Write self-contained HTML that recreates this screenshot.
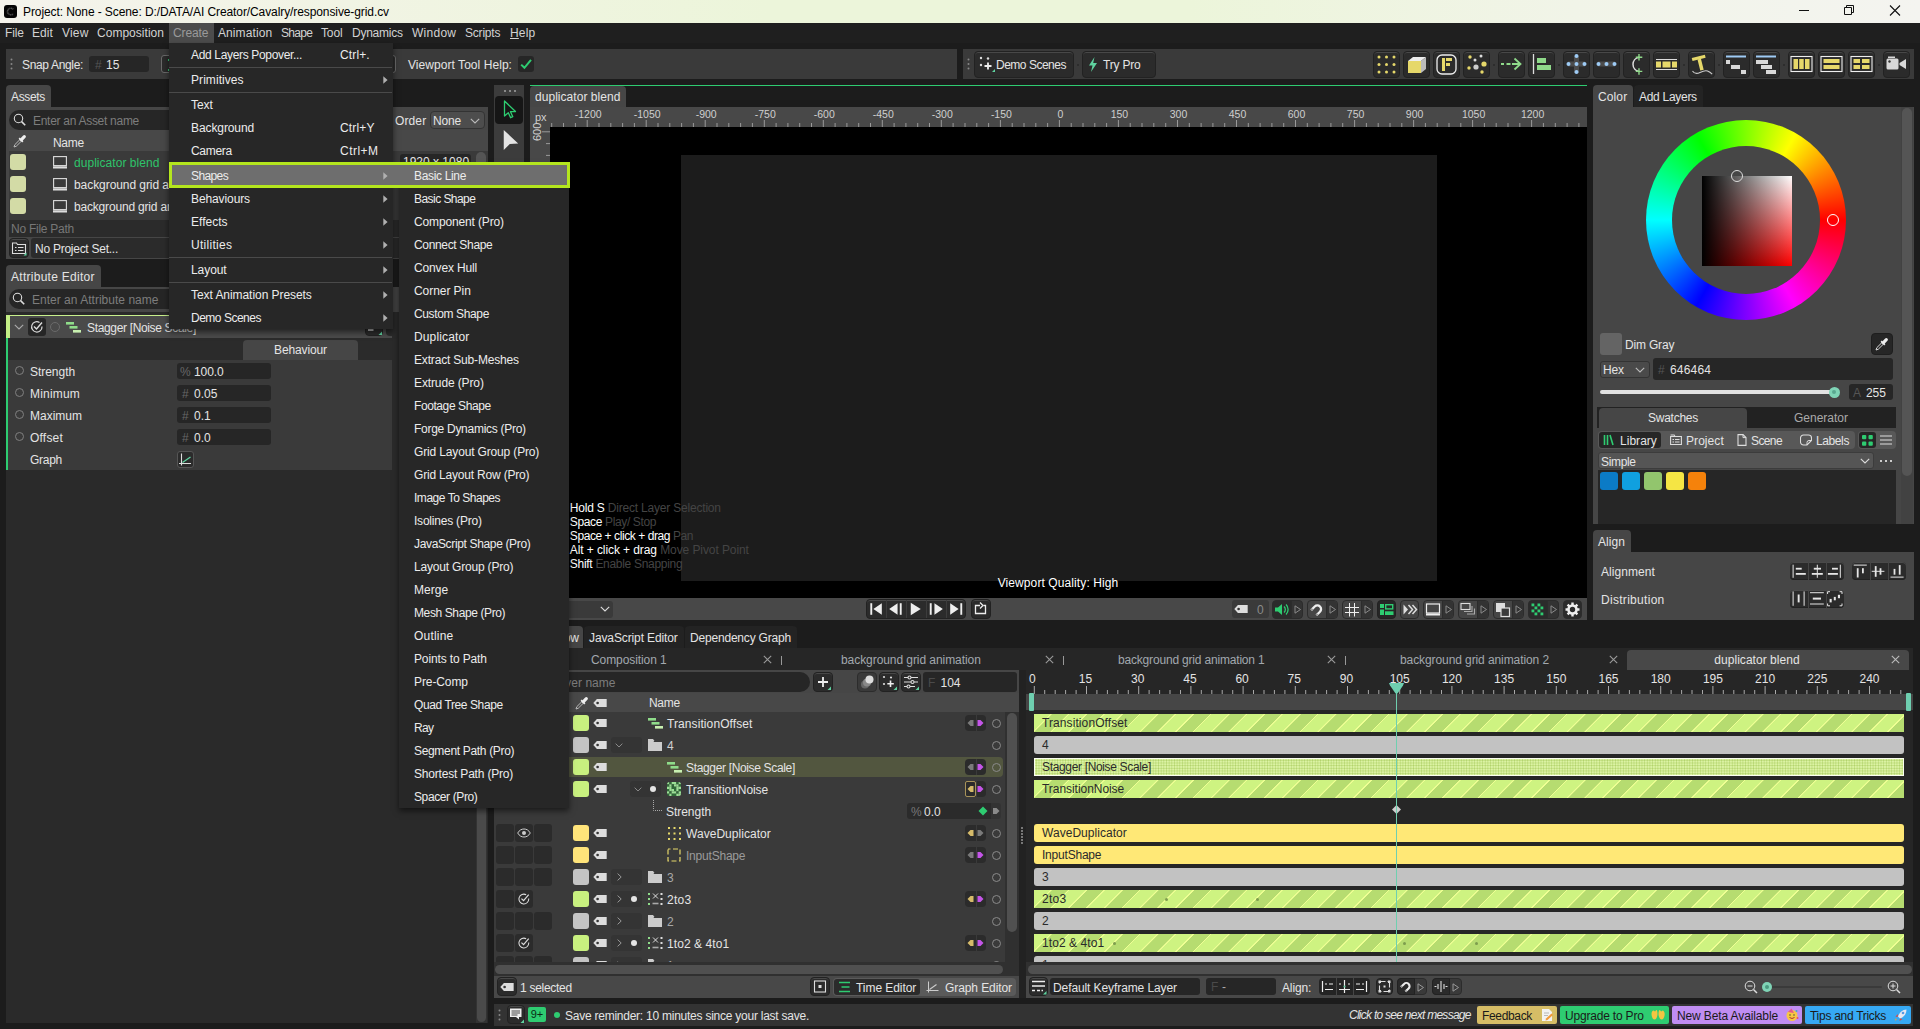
<!DOCTYPE html><html><head><meta charset="utf-8"><title>Cavalry</title><style>
*{box-sizing:border-box}
html,body{margin:0;padding:0}
body{width:1920px;height:1029px;overflow:hidden;background:#1c1c1c;font:12px "Liberation Sans",sans-serif;color:#e4e4e4;position:relative}
div,svg,span.a{position:absolute}
.t{white-space:pre}
.dim{color:#8a8a8a}
.btn{background:#2b2b2b;border:1px solid #222;border-radius:4px;box-shadow:inset 0 1px 0 #484848}
.fld{background:#262626;border-radius:3px}
.tab{background:#464646;border-radius:4px 4px 0 0}
.tabi{background:#232323;border-radius:4px 4px 0 0}
.mi{left:0;width:100%;height:23px;line-height:23px}
</style></head><body>
<div style="left:0px;top:0px;width:1920px;height:23px;background:linear-gradient(90deg,#f4f3ec 0%,#f1f4e4 18%,#ecf5da 40%,#ecf5da 62%,#f1f4e8 82%,#f4f4f0 100%)"></div>
<svg style="left:3.500px;top:4.500px" width="13" height="13" viewBox="0 0 13 13"><rect x="0" y="0" width="13" height="13" rx="3" fill="#050505"/><path d="M9.2 4.2A3.3 3.3 0 1 0 9.2 8.8" fill="none" stroke="#555" stroke-width="1.6" stroke-dasharray="1 .5"/></svg>
<div class="t" style="left:23px;top:1px;height:23px;line-height:23px;color:#000;letter-spacing:-0.094px">Project: None - Scene: D:/DATA/AI Creator/Cavalry/responsive-grid.cv</div>
<svg style="left:1794px;top:0" width="120" height="23" viewBox="0 0 120 23"><path d="M5 10.5h10" stroke="#111" stroke-width="1"/><path d="M50.5 7.5h7v7h-7z M52.5 7.5v-2h7v7h-2" fill="none" stroke="#111" stroke-width="1"/><path d="M96 5.5l10 10M106 5.5l-10 10" stroke="#111" stroke-width="1.1"/></svg>
<div style="left:0px;top:23px;width:1920px;height:20px;background:#1f1f1f"></div>
<div style="left:169px;top:23px;width:45px;height:20px;background:#4c4c4c"></div>
<div class="t" style="left:5px;top:23px;height:20px;line-height:20px;color:#d2d2d2;letter-spacing:-0.161px">File</div>
<div class="t" style="left:32px;top:23px;height:20px;line-height:20px;color:#d2d2d2;letter-spacing:0.028px">Edit</div>
<div class="t" style="left:62px;top:23px;height:20px;line-height:20px;color:#d2d2d2;letter-spacing:0.176px">View</div>
<div class="t" style="left:97px;top:23px;height:20px;line-height:20px;color:#d2d2d2;letter-spacing:0.027px">Composition</div>
<div class="t" style="left:173px;top:23px;height:20px;line-height:20px;color:#9a9a9a;letter-spacing:-0.105px">Create</div>
<div class="t" style="left:218px;top:23px;height:20px;line-height:20px;color:#d2d2d2;letter-spacing:0.092px">Animation</div>
<div class="t" style="left:281px;top:23px;height:20px;line-height:20px;color:#d2d2d2;letter-spacing:-0.681px">Shape</div>
<div class="t" style="left:321px;top:23px;height:20px;line-height:20px;color:#d2d2d2;letter-spacing:-0.129px">Tool</div>
<div class="t" style="left:352px;top:23px;height:20px;line-height:20px;color:#d2d2d2;letter-spacing:-0.248px">Dynamics</div>
<div class="t" style="left:412px;top:23px;height:20px;line-height:20px;color:#d2d2d2;letter-spacing:0.269px">Window</div>
<div class="t" style="left:465px;top:23px;height:20px;line-height:20px;color:#d2d2d2;letter-spacing:-0.198px">Scripts</div>
<div class="t" style="left:510px;top:23px;height:20px;line-height:20px;color:#d2d2d2;letter-spacing:0.153px"><u>H</u>elp</div>
<div style="left:6px;top:49px;width:951px;height:30px;background:#3a3a3a"></div>
<svg style="left:10px;top:58px" width="3" height="12" viewBox="0 0 3 12"><circle cx="1.5" cy="1.5" r="1" fill="#888"/><circle cx="1.5" cy="6" r="1" fill="#888"/><circle cx="1.5" cy="10.5" r="1" fill="#888"/></svg>
<div class="t" style="left:22px;top:50px;height:30px;line-height:30px;;letter-spacing:-0.339px">Snap Angle:</div>
<div class="fld" style="left:89px;top:56px;width:60px;height:16px;"></div>
<div class="t" style="left:95px;top:57px;height:16px;line-height:16px;color:#555">#</div>
<div class="t" style="left:106px;top:57px;height:16px;line-height:16px;">15</div>
<div style="left:161px;top:55px;width:235px;height:18px;background:#2b2b2b;border:1px solid #6a6a6a;border-radius:3px"></div>
<div style="left:168px;top:58.5px;width:1px;height:2px;background:#2ecc71"></div>
<div style="left:168px;top:68.5px;width:1px;height:2px;background:#2ecc71"></div>
<div class="t" style="left:408px;top:50px;height:30px;line-height:30px;;letter-spacing:0.055px">Viewport Tool Help:</div>
<div class="fld" style="left:518px;top:56px;width:16px;height:16px;"></div>
<svg style="left:518px;top:56px" width="16" height="16" viewBox="0 0 16 16"><path d="M3.2 8.6l3.2 3.2 6.6-8" fill="none" stroke="#2ecc71" stroke-width="2"/></svg>
<div style="left:963px;top:49px;width:951px;height:30px;background:#3a3a3a"></div>
<svg style="left:967px;top:58px" width="3" height="12" viewBox="0 0 3 12"><circle cx="1.5" cy="1.5" r="1" fill="#888"/><circle cx="1.5" cy="6" r="1" fill="#888"/><circle cx="1.5" cy="10.5" r="1" fill="#888"/></svg>
<div class="btn" style="left:974px;top:51px;width:100px;height:27px;"></div>
<svg style="left:978px;top:55px" width="20" height="20" viewBox="0 0 20 20"><g fill="#ddd"><circle cx="3" cy="3" r="1.2"/><circle cx="10" cy="3.5" r="1.2"/><circle cx="3" cy="10" r="1.2"/></g><path d="M10 7.5v7M6.5 11h7" stroke="#eee" stroke-width="1.8"/><path d="M17 14v3h-3z" fill="#5fd3a0"/></svg>
<div class="t" style="left:996px;top:52px;height:27px;line-height:27px;;letter-spacing:-0.489px">Demo Scenes</div>
<div class="btn" style="left:1082px;top:51px;width:74px;height:27px;"></div>
<svg style="left:1087px;top:56px" width="12" height="18" viewBox="0 0 12 18"><path d="M7.5 1L2 9.5h3.5L4 16l6-9H6.2z" fill="#5fd3a0"/></svg>
<div class="t" style="left:1103px;top:52px;height:27px;line-height:27px;;letter-spacing:-0.199px">Try Pro</div>
<div class="btn" style="left:1373px;top:51px;width:27px;height:27px;"></div>
<svg style="left:1373px;top:51px" width="27" height="27" viewBox="0 0 27 27"><g fill="#e6d86a"><circle cx="6.0" cy="6.0" r="1.5"/><circle cx="6.0" cy="13.5" r="1.5"/><circle cx="6.0" cy="21.0" r="1.5"/><circle cx="13.5" cy="6.0" r="1.5"/><circle cx="13.5" cy="13.5" r="1.5"/><circle cx="13.5" cy="21.0" r="1.5"/><circle cx="21.0" cy="6.0" r="1.5"/><circle cx="21.0" cy="13.5" r="1.5"/><circle cx="21.0" cy="21.0" r="1.5"/></g></svg>
<div class="btn" style="left:1403px;top:51px;width:27px;height:27px;"></div>
<svg style="left:1403px;top:51px" width="27" height="27" viewBox="0 0 27 27"><path d="M5 10h13v12H5z" fill="#e6d86a"/><path d="M5 10l5-4h13l-5 4z" fill="#eee"/><path d="M18 10l5-4v12l-5 4z" fill="#bbb"/></svg>
<div class="btn" style="left:1433px;top:51px;width:27px;height:27px;"></div>
<svg style="left:1433px;top:51px" width="27" height="27" viewBox="0 0 27 27"><rect x="4" y="4" width="19" height="19" rx="5" fill="none" stroke="#eee" stroke-width="1.3"/><path d="M9 7h3v13H9zM13 7h6v3h-6zM13 12h4v3h-4z" fill="#e6d86a"/></svg>
<div class="btn" style="left:1463px;top:51px;width:27px;height:27px;"></div>
<svg style="left:1463px;top:51px" width="27" height="27" viewBox="0 0 27 27"><circle cx="7" cy="6" r="1.7" fill="#e6d86a"/><circle cx="18" cy="5" r="1.5" fill="#ddd"/><circle cx="12" cy="9" r="1.5" fill="#ddd"/><circle cx="21" cy="13" r="2.6" fill="#e6d86a"/><circle cx="13" cy="16" r="2.6" fill="#ccc"/><circle cx="6" cy="17" r="1.7" fill="#e6d86a"/><circle cx="19" cy="21" r="1.7" fill="#e6d86a"/></svg>
<div class="btn" style="left:1498px;top:51px;width:27px;height:27px;"></div>
<svg style="left:1498px;top:51px" width="27" height="27" viewBox="0 0 27 27"><path d="M3 13h3M8.5 13h4M14 13h8M16.5 7.5l6 5.5-6 5.5" fill="none" stroke="#8fd98a" stroke-width="1.8"/></svg>
<div class="btn" style="left:1528px;top:51px;width:27px;height:27px;"></div>
<svg style="left:1528px;top:51px" width="27" height="27" viewBox="0 0 27 27"><path d="M5.5 3v20" stroke="#ddd" stroke-width="1.3"/><rect x="9" y="7" width="9" height="5" fill="#8fd98a"/><rect x="9" y="14" width="14" height="5" fill="#8fd98a"/></svg>
<div class="btn" style="left:1563px;top:51px;width:27px;height:27px;"></div>
<svg style="left:1563px;top:51px" width="27" height="27" viewBox="0 0 27 27"><path d="M5 13h17M13.5 5v17" stroke="#4c4c4c" stroke-width="5"/><g fill="#9ecbf5"><circle cx="13.5" cy="5" r="2"/><circle cx="13.5" cy="13" r="2"/><circle cx="13.5" cy="21" r="2"/><circle cx="5.5" cy="13" r="2"/><circle cx="21.5" cy="13" r="2"/></g></svg>
<div class="btn" style="left:1593px;top:51px;width:27px;height:27px;"></div>
<svg style="left:1593px;top:51px" width="27" height="27" viewBox="0 0 27 27"><path d="M5 13h17" stroke="#4c4c4c" stroke-width="5"/><g fill="#9ecbf5"><circle cx="5.5" cy="13" r="2"/><circle cx="13.5" cy="13" r="2"/><circle cx="21.5" cy="13" r="2"/></g></svg>
<div class="btn" style="left:1623px;top:51px;width:27px;height:27px;"></div>
<svg style="left:1623px;top:51px" width="27" height="27" viewBox="0 0 27 27"><path d="M16 6.200A7.200 7.200 0 0 0 16 20.400" fill="none" stroke="#ddd" stroke-width="1.500"/><path d="M16 3v6.500M12.800 6.200h6.500M16 17.200v6.500M12.800 20.400h6.500" fill="none" stroke="#8fd98a" stroke-width="1.400"/></svg>
<div class="btn" style="left:1653px;top:51px;width:27px;height:27px;"></div>
<svg style="left:1653px;top:51px" width="27" height="27" viewBox="0 0 27 27"><path d="M3 8.5h21M3 18.5h21" stroke="#ddd" stroke-width="1.1"/><rect x="3" y="10.5" width="5" height="6" fill="#e6d86a"/><rect x="9.5" y="10.5" width="8" height="6" fill="#e6d86a"/><rect x="19" y="10.5" width="5" height="6" fill="#e6d86a"/></svg>
<div class="btn" style="left:1688px;top:51px;width:27px;height:27px;"></div>
<svg style="left:1688px;top:51px" width="27" height="27" viewBox="0 0 27 27"><g transform="rotate(-14 11 7)"><rect x="4" y="5.200" width="13.500" height="3.200" fill="#e6d86a"/><rect x="9.200" y="8" width="3.500" height="11.500" fill="#e6d86a"/></g><path d="M4.500 20c2 3 4.500 3 7.500 1.500s5-2.500 7.500-1.500 3.500 2 4.700 3.200" fill="none" stroke="#ccc" stroke-width="1.100"/></svg>
<div class="btn" style="left:1723px;top:51px;width:27px;height:27px;"></div>
<svg style="left:1723px;top:51px" width="27" height="27" viewBox="0 0 27 27"><path d="M3 5.5h20" stroke="#9ecbf5" stroke-width="2"/><rect x="3" y="9" width="4" height="4" fill="#d8d8d8"/><rect x="8" y="14" width="9" height="4" fill="#d8d8d8"/><rect x="18" y="19" width="5" height="4" fill="#d8d8d8"/></svg>
<div class="btn" style="left:1753px;top:51px;width:27px;height:27px;"></div>
<svg style="left:1753px;top:51px" width="27" height="27" viewBox="0 0 27 27"><path d="M3 5.5h20" stroke="#9ecbf5" stroke-width="2"/><rect x="3" y="9" width="12" height="4" fill="#d8d8d8"/><rect x="8" y="14" width="11" height="4" fill="#d8d8d8"/><rect x="13" y="19" width="10" height="4" fill="#d8d8d8"/></svg>
<div class="btn" style="left:1788px;top:51px;width:27px;height:27px;"></div>
<svg style="left:1788px;top:51px" width="27" height="27" viewBox="0 0 27 27"><rect x="3" y="5.5" width="21" height="15" fill="none" stroke="#eee" stroke-width="1.1"/><rect x="5.5" y="8" width="4.5" height="10" fill="#e6d86a"/><rect x="11.2" y="8" width="4.5" height="10" fill="#e6d86a"/><rect x="17" y="8" width="4.5" height="10" fill="#e6d86a"/></svg>
<div class="btn" style="left:1818px;top:51px;width:27px;height:27px;"></div>
<svg style="left:1818px;top:51px" width="27" height="27" viewBox="0 0 27 27"><rect x="3" y="5.5" width="21" height="15" fill="none" stroke="#eee" stroke-width="1.1"/><rect x="5.5" y="8" width="16" height="4" fill="#e6d86a"/><rect x="5.5" y="14" width="16" height="4" fill="#e6d86a"/></svg>
<div class="btn" style="left:1848px;top:51px;width:27px;height:27px;"></div>
<svg style="left:1848px;top:51px" width="27" height="27" viewBox="0 0 27 27"><rect x="3" y="5.5" width="21" height="15" fill="none" stroke="#eee" stroke-width="1.1"/><rect x="5.5" y="8" width="6.5" height="4" fill="#e6d86a"/><rect x="14" y="8" width="7.5" height="4" fill="#e6d86a"/><rect x="5.5" y="14" width="6.5" height="4" fill="#e6d86a"/><rect x="14" y="14" width="7.5" height="4" fill="#e6d86a"/></svg>
<div class="btn" style="left:1883px;top:51px;width:27px;height:27px;"></div>
<svg style="left:1883px;top:51px" width="27" height="27" viewBox="0 0 27 27"><rect x="3.5" y="7.5" width="12" height="11" rx="1.5" fill="#d8d8d8"/><rect x="5" y="5.5" width="7" height="1.5" fill="#d8d8d8"/><path d="M16.5 12l6.5-4v10l-6.5-4z" fill="#d8d8d8"/><circle cx="6.5" cy="10.5" r="1.2" fill="#333"/></svg>
<div style="left:1492.5px;top:63.5px;width:2px;height:2px;background:#2a2a2a;border-radius:1px"></div>
<div style="left:1557.5px;top:63.5px;width:2px;height:2px;background:#2a2a2a;border-radius:1px"></div>
<div style="left:1682.5px;top:63.5px;width:2px;height:2px;background:#2a2a2a;border-radius:1px"></div>
<div style="left:1717.5px;top:63.5px;width:2px;height:2px;background:#2a2a2a;border-radius:1px"></div>
<div style="left:1782.5px;top:63.5px;width:2px;height:2px;background:#2a2a2a;border-radius:1px"></div>
<div style="left:1877.5px;top:63.5px;width:2px;height:2px;background:#2a2a2a;border-radius:1px"></div>
<div style="left:1077px;top:63.5px;width:2px;height:2px;background:#2a2a2a;border-radius:1px"></div>
<div style="left:6px;top:85px;width:482px;height:22px;background:#1c1c1c"></div>
<div class="tab" style="left:6px;top:85px;width:45px;height:22px;"></div>
<div class="t" style="left:11px;top:86px;height:22px;line-height:22px;;letter-spacing:-0.336px">Assets</div>
<div style="left:6px;top:107px;width:482px;height:152px;background:#464646"></div>
<div style="left:9px;top:110px;width:382px;height:20px;background:#262626;border-radius:10px 3px 3px 10px"></div>
<svg style="left:13px;top:113px" width="14" height="14" viewBox="0 0 14 14"><circle cx="5.5" cy="5.5" r="4.2" fill="none" stroke="#ddd" stroke-width="1.1"/><path d="M8.6 8.6l3.6 3.6" stroke="#ddd" stroke-width="1.6"/></svg>
<div class="t" style="left:33px;top:111px;height:20px;line-height:20px;color:#7d7d7d;letter-spacing:-0.285px">Enter an Asset name</div>
<div class="t" style="left:395px;top:111px;height:20px;line-height:20px;;letter-spacing:0.113px">Order</div>
<div style="left:430px;top:111px;width:55px;height:18px;background:#4d4d4d;border:1px solid #333;border-radius:4px"></div>
<div class="t" style="left:433px;top:112px;height:18px;line-height:18px;;letter-spacing:-0.172px">None</div>
<svg style="left:470px;top:118px" width="10" height="6.0" viewBox="0 0 10 6"><path d="M0.8 0.8L5 5l4.2-4.200" fill="none" stroke="#bbb" stroke-width="1.1"/></svg>
<div style="left:9px;top:130px;width:479px;height:21px;background:#484848"></div>
<svg style="left:13px;top:134px" width="14" height="14" viewBox="0 0 14 14"><path d="M1 13l.8-2.300 5.200-5.200 1.500 1.500-5.200 5.200z" fill="none" stroke="#bbb" stroke-width="1"/><path d="M6.200 4.200l3.600 3.600" stroke="#eee" stroke-width="1.800"/><path d="M8.700 5.300l2.600-2.600" stroke="#eee" stroke-width="3.200" stroke-linecap="round"/></svg>
<div class="t" style="left:53px;top:133px;height:21px;line-height:21px;;letter-spacing:-0.304px">Name</div>
<div style="left:9px;top:151px;width:466px;height:69px;background:#3a3a3a"></div>
<div class="fld" style="left:400px;top:154px;width:71px;height:16px;"></div>
<div class="t" style="left:403px;top:154px;height:16px;line-height:16px;">1920 x 1080</div>
<div style="left:474px;top:151px;width:14px;height:69px;background:#3a3a3a"></div>
<div style="left:476px;top:152px;width:10px;height:40px;background:#555;border-radius:5px"></div>
<div style="left:10px;top:154px;width:16px;height:16px;background:#d3dba6;border-radius:3px"></div>
<svg style="left:53px;top:156px" width="14" height="13" viewBox="0 0 14 13"><rect x="0.6" y="0.6" width="12.8" height="9" fill="none" stroke="#ddd" stroke-width="1.1"/><rect x="0" y="10.3" width="14" height="2.2" fill="#ddd"/></svg>
<div class="t" style="left:74px;top:152px;height:22px;line-height:22px;color:#2ec46a;letter-spacing:0.042px">duplicator blend</div>
<div style="left:10px;top:176px;width:16px;height:16px;background:#d3dba6;border-radius:3px"></div>
<svg style="left:53px;top:178px" width="14" height="13" viewBox="0 0 14 13"><rect x="0.6" y="0.6" width="12.8" height="9" fill="none" stroke="#ddd" stroke-width="1.1"/><rect x="0" y="10.3" width="14" height="2.2" fill="#ddd"/></svg>
<div class="t" style="left:74px;top:174px;height:22px;line-height:22px;color:#e4e4e4;letter-spacing:-0.065px">background grid animation</div>
<div style="left:10px;top:198px;width:16px;height:16px;background:#d3dba6;border-radius:3px"></div>
<svg style="left:53px;top:200px" width="14" height="13" viewBox="0 0 14 13"><rect x="0.6" y="0.6" width="12.8" height="9" fill="none" stroke="#ddd" stroke-width="1.1"/><rect x="0" y="10.3" width="14" height="2.2" fill="#ddd"/></svg>
<div class="t" style="left:74px;top:196px;height:22px;line-height:22px;color:#e4e4e4;letter-spacing:-0.183px">background grid animation 1</div>
<div style="left:9px;top:220px;width:466px;height:17px;background:#2b2b2b"></div>
<div class="t" style="left:11px;top:221px;height:17px;line-height:17px;color:#777;letter-spacing:-0.253px">No File Path</div>
<div class="btn" style="left:9px;top:238px;width:20px;height:20px;"></div>
<svg style="left:11px;top:240px" width="16" height="16" viewBox="0 0 16 16"><path d="M1.500 3h4l1 1.500h8v9h-13z" fill="none" stroke="#ddd" stroke-width="1.1"/><path d="M4 7.500h1.500M7 7.500h5.500M4 10.500h1.500M7 10.500h5.500" stroke="#ddd" stroke-width="1.1"/><path d="M15.500 12.500v3h-3z" fill="#5fd3a0"/></svg>
<div style="left:31px;top:238px;width:444px;height:20px;background:#2b2b2b;border-radius:3px"></div>
<div class="t" style="left:35px;top:239px;height:20px;line-height:20px;;letter-spacing:-0.257px">No Project Set...</div>
<div style="left:6px;top:265px;width:482px;height:22px;background:#1c1c1c"></div>
<div class="tab" style="left:6px;top:265px;width:95px;height:22px;"></div>
<div class="t" style="left:11px;top:266px;height:22px;line-height:22px;;letter-spacing:0.273px">Attribute Editor</div>
<div style="left:6px;top:287px;width:482px;height:736px;background:#2a2a2a"></div>
<div style="left:6px;top:287px;width:482px;height:25px;background:#464646"></div>
<div style="left:9px;top:289px;width:382px;height:20px;background:#262626;border-radius:10px 3px 3px 10px"></div>
<svg style="left:12px;top:292px" width="14" height="14" viewBox="0 0 14 14"><circle cx="5.5" cy="5.5" r="4.2" fill="none" stroke="#ddd" stroke-width="1.1"/><path d="M8.6 8.6l3.6 3.6" stroke="#ddd" stroke-width="1.6"/></svg>
<div class="t" style="left:32px;top:290px;height:20px;line-height:20px;color:#7d7d7d;letter-spacing:0.018px">Enter an Attribute name</div>
<div style="left:476px;top:312px;width:11px;height:711px;background:#333"></div>
<div style="left:477px;top:313px;width:9px;height:709px;background:#4a4a4a;border-radius:4.5px"></div>
<div style="left:6px;top:315px;width:386px;height:23px;background:#4a4a4a;border-top:1px solid #c8f08c"></div>
<div style="left:6px;top:315px;width:4px;height:23px;background:#c4ee86"></div>
<div style="left:6px;top:338px;width:1.5px;height:132px;background:#2ecc71"></div>
<svg style="left:14px;top:324px" width="10" height="6.0" viewBox="0 0 10 6"><path d="M0.8 0.8L5 5l4.2-4.200" fill="none" stroke="#aaa" stroke-width="1.1"/></svg>
<div style="left:28px;top:318px;width:18px;height:18px;background:#262626;border-radius:3px"></div>
<svg style="left:30px;top:320px" width="14" height="14" viewBox="0 0 14 14"><path d="M12 6.500A5.200 5.200 0 1 1 9.500 2.400" fill="none" stroke="#ddd" stroke-width="1.200"/><path d="M4 6.500l2.500 2.500 5.500-6.500" fill="none" stroke="#ddd" stroke-width="1.400"/></svg>
<div style="left:50px;top:322px;width:10px;height:10px;border:1px solid #6a6a6a;border-radius:5px"></div>
<svg style="left:66px;top:322px" width="15" height="11" viewBox="0 0 15 11"><rect x="0" y="0" width="8" height="2.600" fill="#8fdc8a"/><rect x="3.500" y="4" width="8" height="2.600" fill="#8fdc8a"/><rect x="7" y="8" width="8" height="2.600" fill="#c8f0b0"/></svg>
<div class="t" style="left:87px;top:317px;height:23px;line-height:23px;;letter-spacing:-0.341px">Stagger [Noise Scale]</div>
<div class="btn" style="left:365px;top:318px;width:18px;height:18px;"></div>
<svg style="left:365px;top:318px" width="18" height="18" viewBox="0 0 18 18"><path d="M3 12h5.500" stroke="#ddd" stroke-width="1.500"/><path d="M17 13.500V17h-3.500z" fill="#5fd3a0"/></svg>
<div style="left:386px;top:318px;width:6px;height:18px;background:#2b2b2b;border-radius:4px 0 0 4px"></div>
<div style="left:7.5px;top:338px;width:384.5px;height:22px;background:#2b2b2b"></div>
<div style="left:243px;top:340px;width:115px;height:20px;background:#464646;border-radius:4px 4px 0 0"></div>
<div class="t" style="left:243px;top:340px;height:20px;line-height:20px;width:115px;text-align:center;letter-spacing:-0.116px">Behaviour</div>
<div style="left:7.5px;top:360px;width:384.5px;height:110px;background:#3a3a3a"></div>
<div style="left:14.5px;top:365.5px;width:9px;height:9px;border:1px solid #808080;border-radius:5px"></div>
<div class="t" style="left:30px;top:361px;height:22px;line-height:22px;;letter-spacing:-0.034px">Strength</div>
<div class="fld" style="left:177px;top:363px;width:94px;height:16px;"></div>
<div class="t" style="left:180px;top:364px;height:16px;line-height:16px;color:#666">%</div>
<div class="t" style="left:194px;top:364px;height:16px;line-height:16px;;letter-spacing:-0.086px">100.0</div>
<div style="left:14.5px;top:387.5px;width:9px;height:9px;border:1px solid #808080;border-radius:5px"></div>
<div class="t" style="left:30px;top:383px;height:22px;line-height:22px;;letter-spacing:0.190px">Minimum</div>
<div class="fld" style="left:177px;top:385px;width:94px;height:16px;"></div>
<div class="t" style="left:182px;top:386px;height:16px;line-height:16px;color:#666">#</div>
<div class="t" style="left:194px;top:386px;height:16px;line-height:16px;;letter-spacing:-0.015px">0.05</div>
<div style="left:14.5px;top:409.5px;width:9px;height:9px;border:1px solid #808080;border-radius:5px"></div>
<div class="t" style="left:30px;top:405px;height:22px;line-height:22px;;letter-spacing:-0.002px">Maximum</div>
<div class="fld" style="left:177px;top:407px;width:94px;height:16px;"></div>
<div class="t" style="left:182px;top:408px;height:16px;line-height:16px;color:#666">#</div>
<div class="t" style="left:194px;top:408px;height:16px;line-height:16px;">0.1</div>
<div style="left:14.5px;top:431.5px;width:9px;height:9px;border:1px solid #808080;border-radius:5px"></div>
<div class="t" style="left:30px;top:427px;height:22px;line-height:22px;;letter-spacing:0.201px">Offset</div>
<div class="fld" style="left:177px;top:429px;width:94px;height:16px;"></div>
<div class="t" style="left:182px;top:430px;height:16px;line-height:16px;color:#666">#</div>
<div class="t" style="left:194px;top:430px;height:16px;line-height:16px;">0.0</div>
<div class="t" style="left:30px;top:449px;height:22px;line-height:22px;;letter-spacing:-0.272px">Graph</div>
<div style="left:177px;top:451px;width:17px;height:17px;background:#2b2b2b;border:1px solid #555;border-radius:3px"></div>
<svg style="left:178px;top:452px" width="15" height="15" viewBox="0 0 15 15"><path d="M3.500 1.500v12M1 11.500h12" stroke="#ddd" stroke-width="1.100" fill="none"/><path d="M4.500 10.500l8-5.500" stroke="#5fd3a0" stroke-width="1.300"/></svg>
<div style="left:494px;top:85px;width:30px;height:535px;background:#3c3c3c"></div>
<div style="left:503.5px;top:89.5px;width:2px;height:2px;background:#888"></div>
<div style="left:508.5px;top:89.5px;width:2px;height:2px;background:#888"></div>
<div style="left:513.5px;top:89.5px;width:2px;height:2px;background:#888"></div>
<div style="left:495px;top:96px;width:28px;height:28px;background:#161616;border-radius:4px"></div>
<svg style="left:495px;top:96px" width="28" height="28" viewBox="0 0 28 28"><path d="M9.500 5v15l3.800-3.300 2.300 5 2.200-1-2.300-5 5-.200z" fill="none" stroke="#2ecc71" stroke-width="1.300" stroke-linejoin="round"/></svg>
<svg style="left:495px;top:125px" width="28" height="28" viewBox="0 0 28 28"><path d="M8.750 5L23.200 18.400l-8.400.5-6.050 6.100z" fill="#e4e4e4"/></svg>
<div style="left:530px;top:85px;width:1057px;height:22px;background:#1c1c1c"></div>
<div style="left:530px;top:85px;width:1057px;height:1px;background:#2ecc71"></div>
<div class="tab" style="left:530px;top:86px;width:96px;height:21px;"></div>
<div class="t" style="left:535px;top:86px;height:22px;line-height:22px;;letter-spacing:0.042px">duplicator blend</div>
<div style="left:530px;top:107px;width:1057px;height:20px;background:#484848"></div>
<div style="left:530px;top:107px;width:20px;height:491px;background:#484848"></div>
<div style="left:550px;top:127px;width:1037px;height:471px;background:#000"></div>
<div style="left:681px;top:155px;width:756px;height:426px;background:#1c1c1c"></div>
<svg style="left:530px;top:107px" width="1057" height="491" viewBox="0 0 1057 491"><rect x="21.2" y="16" width="1" height="4" fill="#9a9a9a"/><rect x="33.0" y="16" width="1" height="4" fill="#9a9a9a"/><rect x="44.9" y="16" width="1" height="4" fill="#9a9a9a"/><rect x="56.7" y="13" width="1" height="7" fill="#9a9a9a"/><rect x="68.5" y="16" width="1" height="4" fill="#9a9a9a"/><rect x="80.3" y="16" width="1" height="4" fill="#9a9a9a"/><rect x="92.1" y="16" width="1" height="4" fill="#9a9a9a"/><rect x="103.9" y="16" width="1" height="4" fill="#9a9a9a"/><rect x="115.7" y="13" width="1" height="7" fill="#9a9a9a"/><rect x="127.5" y="16" width="1" height="4" fill="#9a9a9a"/><rect x="139.3" y="16" width="1" height="4" fill="#9a9a9a"/><rect x="151.1" y="16" width="1" height="4" fill="#9a9a9a"/><rect x="162.9" y="16" width="1" height="4" fill="#9a9a9a"/><rect x="174.7" y="13" width="1" height="7" fill="#9a9a9a"/><rect x="186.5" y="16" width="1" height="4" fill="#9a9a9a"/><rect x="198.3" y="16" width="1" height="4" fill="#9a9a9a"/><rect x="210.1" y="16" width="1" height="4" fill="#9a9a9a"/><rect x="221.9" y="16" width="1" height="4" fill="#9a9a9a"/><rect x="233.8" y="13" width="1" height="7" fill="#9a9a9a"/><rect x="245.6" y="16" width="1" height="4" fill="#9a9a9a"/><rect x="257.4" y="16" width="1" height="4" fill="#9a9a9a"/><rect x="269.2" y="16" width="1" height="4" fill="#9a9a9a"/><rect x="281.0" y="16" width="1" height="4" fill="#9a9a9a"/><rect x="292.8" y="13" width="1" height="7" fill="#9a9a9a"/><rect x="304.6" y="16" width="1" height="4" fill="#9a9a9a"/><rect x="316.4" y="16" width="1" height="4" fill="#9a9a9a"/><rect x="328.2" y="16" width="1" height="4" fill="#9a9a9a"/><rect x="340.0" y="16" width="1" height="4" fill="#9a9a9a"/><rect x="351.8" y="13" width="1" height="7" fill="#9a9a9a"/><rect x="363.6" y="16" width="1" height="4" fill="#9a9a9a"/><rect x="375.4" y="16" width="1" height="4" fill="#9a9a9a"/><rect x="387.2" y="16" width="1" height="4" fill="#9a9a9a"/><rect x="399.0" y="16" width="1" height="4" fill="#9a9a9a"/><rect x="410.8" y="13" width="1" height="7" fill="#9a9a9a"/><rect x="422.6" y="16" width="1" height="4" fill="#9a9a9a"/><rect x="434.5" y="16" width="1" height="4" fill="#9a9a9a"/><rect x="446.3" y="16" width="1" height="4" fill="#9a9a9a"/><rect x="458.1" y="16" width="1" height="4" fill="#9a9a9a"/><rect x="469.9" y="13" width="1" height="7" fill="#9a9a9a"/><rect x="481.7" y="16" width="1" height="4" fill="#9a9a9a"/><rect x="493.5" y="16" width="1" height="4" fill="#9a9a9a"/><rect x="505.3" y="16" width="1" height="4" fill="#9a9a9a"/><rect x="517.1" y="16" width="1" height="4" fill="#9a9a9a"/><rect x="528.9" y="13" width="1" height="7" fill="#9a9a9a"/><rect x="540.7" y="16" width="1" height="4" fill="#9a9a9a"/><rect x="552.5" y="16" width="1" height="4" fill="#9a9a9a"/><rect x="564.3" y="16" width="1" height="4" fill="#9a9a9a"/><rect x="576.1" y="16" width="1" height="4" fill="#9a9a9a"/><rect x="587.9" y="13" width="1" height="7" fill="#9a9a9a"/><rect x="599.7" y="16" width="1" height="4" fill="#9a9a9a"/><rect x="611.5" y="16" width="1" height="4" fill="#9a9a9a"/><rect x="623.3" y="16" width="1" height="4" fill="#9a9a9a"/><rect x="635.2" y="16" width="1" height="4" fill="#9a9a9a"/><rect x="647.0" y="13" width="1" height="7" fill="#9a9a9a"/><rect x="658.8" y="16" width="1" height="4" fill="#9a9a9a"/><rect x="670.6" y="16" width="1" height="4" fill="#9a9a9a"/><rect x="682.4" y="16" width="1" height="4" fill="#9a9a9a"/><rect x="694.2" y="16" width="1" height="4" fill="#9a9a9a"/><rect x="706.0" y="13" width="1" height="7" fill="#9a9a9a"/><rect x="717.8" y="16" width="1" height="4" fill="#9a9a9a"/><rect x="729.6" y="16" width="1" height="4" fill="#9a9a9a"/><rect x="741.4" y="16" width="1" height="4" fill="#9a9a9a"/><rect x="753.2" y="16" width="1" height="4" fill="#9a9a9a"/><rect x="765.0" y="13" width="1" height="7" fill="#9a9a9a"/><rect x="776.8" y="16" width="1" height="4" fill="#9a9a9a"/><rect x="788.6" y="16" width="1" height="4" fill="#9a9a9a"/><rect x="800.4" y="16" width="1" height="4" fill="#9a9a9a"/><rect x="812.2" y="16" width="1" height="4" fill="#9a9a9a"/><rect x="824.1" y="13" width="1" height="7" fill="#9a9a9a"/><rect x="835.9" y="16" width="1" height="4" fill="#9a9a9a"/><rect x="847.7" y="16" width="1" height="4" fill="#9a9a9a"/><rect x="859.5" y="16" width="1" height="4" fill="#9a9a9a"/><rect x="871.3" y="16" width="1" height="4" fill="#9a9a9a"/><rect x="883.1" y="13" width="1" height="7" fill="#9a9a9a"/><rect x="894.9" y="16" width="1" height="4" fill="#9a9a9a"/><rect x="906.7" y="16" width="1" height="4" fill="#9a9a9a"/><rect x="918.5" y="16" width="1" height="4" fill="#9a9a9a"/><rect x="930.3" y="16" width="1" height="4" fill="#9a9a9a"/><rect x="942.1" y="13" width="1" height="7" fill="#9a9a9a"/><rect x="953.9" y="16" width="1" height="4" fill="#9a9a9a"/><rect x="965.7" y="16" width="1" height="4" fill="#9a9a9a"/><rect x="977.5" y="16" width="1" height="4" fill="#9a9a9a"/><rect x="989.3" y="16" width="1" height="4" fill="#9a9a9a"/><rect x="1001.1" y="13" width="1" height="7" fill="#9a9a9a"/><rect x="1012.9" y="16" width="1" height="4" fill="#9a9a9a"/><rect x="1024.8" y="16" width="1" height="4" fill="#9a9a9a"/><rect x="1036.6" y="16" width="1" height="4" fill="#9a9a9a"/><rect x="1048.4" y="16" width="1" height="4" fill="#9a9a9a"/><rect x="12" y="24.3" width="8" height="1" fill="#9a9a9a"/><rect x="16" y="36.1" width="4" height="1" fill="#9a9a9a"/><rect x="16" y="47.9" width="4" height="1" fill="#9a9a9a"/><rect x="16" y="59.7" width="4" height="1" fill="#9a9a9a"/><rect x="16" y="71.5" width="4" height="1" fill="#9a9a9a"/><rect x="12" y="83.3" width="8" height="1" fill="#9a9a9a"/><rect x="16" y="95.1" width="4" height="1" fill="#9a9a9a"/><rect x="16" y="106.9" width="4" height="1" fill="#9a9a9a"/><rect x="16" y="118.7" width="4" height="1" fill="#9a9a9a"/><rect x="16" y="130.6" width="4" height="1" fill="#9a9a9a"/><rect x="12" y="142.4" width="8" height="1" fill="#9a9a9a"/><rect x="16" y="154.2" width="4" height="1" fill="#9a9a9a"/><rect x="16" y="166.0" width="4" height="1" fill="#9a9a9a"/><rect x="16" y="177.8" width="4" height="1" fill="#9a9a9a"/><rect x="16" y="189.6" width="4" height="1" fill="#9a9a9a"/><rect x="12" y="201.4" width="8" height="1" fill="#9a9a9a"/><rect x="16" y="213.2" width="4" height="1" fill="#9a9a9a"/><rect x="16" y="225.0" width="4" height="1" fill="#9a9a9a"/><rect x="16" y="236.8" width="4" height="1" fill="#9a9a9a"/><rect x="16" y="248.6" width="4" height="1" fill="#9a9a9a"/><rect x="12" y="260.4" width="8" height="1" fill="#9a9a9a"/><rect x="16" y="272.2" width="4" height="1" fill="#9a9a9a"/><rect x="16" y="284.0" width="4" height="1" fill="#9a9a9a"/><rect x="16" y="295.8" width="4" height="1" fill="#9a9a9a"/><rect x="16" y="307.6" width="4" height="1" fill="#9a9a9a"/><rect x="12" y="319.4" width="8" height="1" fill="#9a9a9a"/><rect x="16" y="331.3" width="4" height="1" fill="#9a9a9a"/><rect x="16" y="343.1" width="4" height="1" fill="#9a9a9a"/><rect x="16" y="354.9" width="4" height="1" fill="#9a9a9a"/><rect x="16" y="366.7" width="4" height="1" fill="#9a9a9a"/><rect x="12" y="378.5" width="8" height="1" fill="#9a9a9a"/><rect x="16" y="390.3" width="4" height="1" fill="#9a9a9a"/><rect x="16" y="402.1" width="4" height="1" fill="#9a9a9a"/><rect x="16" y="413.9" width="4" height="1" fill="#9a9a9a"/><rect x="16" y="425.7" width="4" height="1" fill="#9a9a9a"/><rect x="12" y="437.5" width="8" height="1" fill="#9a9a9a"/><rect x="16" y="449.3" width="4" height="1" fill="#9a9a9a"/><rect x="16" y="461.1" width="4" height="1" fill="#9a9a9a"/><rect x="16" y="472.9" width="4" height="1" fill="#9a9a9a"/><rect x="16" y="484.7" width="4" height="1" fill="#9a9a9a"/></svg>
<div class="t" style="left:558.2px;top:108px;height:13px;line-height:13px;width:60px;text-align:center;font-size:10.500px;color:#cfcfcf">-1200</div>
<div class="t" style="left:617.2px;top:108px;height:13px;line-height:13px;width:60px;text-align:center;font-size:10.500px;color:#cfcfcf">-1050</div>
<div class="t" style="left:676.2px;top:108px;height:13px;line-height:13px;width:60px;text-align:center;font-size:10.500px;color:#cfcfcf">-900</div>
<div class="t" style="left:735.3px;top:108px;height:13px;line-height:13px;width:60px;text-align:center;font-size:10.500px;color:#cfcfcf">-750</div>
<div class="t" style="left:794.3px;top:108px;height:13px;line-height:13px;width:60px;text-align:center;font-size:10.500px;color:#cfcfcf">-600</div>
<div class="t" style="left:853.3px;top:108px;height:13px;line-height:13px;width:60px;text-align:center;font-size:10.500px;color:#cfcfcf">-450</div>
<div class="t" style="left:912.3px;top:108px;height:13px;line-height:13px;width:60px;text-align:center;font-size:10.500px;color:#cfcfcf">-300</div>
<div class="t" style="left:971.4px;top:108px;height:13px;line-height:13px;width:60px;text-align:center;font-size:10.500px;color:#cfcfcf">-150</div>
<div class="t" style="left:1030.4px;top:108px;height:13px;line-height:13px;width:60px;text-align:center;font-size:10.500px;color:#cfcfcf">0</div>
<div class="t" style="left:1089.4px;top:108px;height:13px;line-height:13px;width:60px;text-align:center;font-size:10.500px;color:#cfcfcf">150</div>
<div class="t" style="left:1148.5px;top:108px;height:13px;line-height:13px;width:60px;text-align:center;font-size:10.500px;color:#cfcfcf">300</div>
<div class="t" style="left:1207.5px;top:108px;height:13px;line-height:13px;width:60px;text-align:center;font-size:10.500px;color:#cfcfcf">450</div>
<div class="t" style="left:1266.5px;top:108px;height:13px;line-height:13px;width:60px;text-align:center;font-size:10.500px;color:#cfcfcf">600</div>
<div class="t" style="left:1325.6px;top:108px;height:13px;line-height:13px;width:60px;text-align:center;font-size:10.500px;color:#cfcfcf">750</div>
<div class="t" style="left:1384.6px;top:108px;height:13px;line-height:13px;width:60px;text-align:center;font-size:10.500px;color:#cfcfcf">900</div>
<div class="t" style="left:1443.6px;top:108px;height:13px;line-height:13px;width:60px;text-align:center;font-size:10.500px;color:#cfcfcf">1050</div>
<div class="t" style="left:1502.6px;top:108px;height:13px;line-height:13px;width:60px;text-align:center;font-size:10.500px;color:#cfcfcf">1200</div>
<div class="t" style="left:535px;top:111px;height:12px;line-height:12px;font-size:11px;color:#cfcfcf">px</div>
<div class="t" style="left:531px;top:141px;width:22px;height:12px;line-height:12px;font-size:11px;color:#cfcfcf;transform:rotate(-90deg);transform-origin:0 0;">600</div>
<div class="t" style="left:530px;top:378px;width:22px;height:12px;line-height:12px;font-size:11px;color:#cfcfcf;transform:rotate(-90deg);transform-origin:0 0;">0</div>
<div class="t" style="left:569.8px;top:501px;height:14px;line-height:14px;;letter-spacing:-0.198px"><span style="color:#fff">Hold S</span> <span style="color:#444">Direct Layer Selection</span></div>
<div class="t" style="left:569.8px;top:515px;height:14px;line-height:14px;;letter-spacing:-0.363px"><span style="color:#fff">Space</span> <span style="color:#444">Play/ Stop</span></div>
<div class="t" style="left:569.8px;top:529px;height:14px;line-height:14px;;letter-spacing:-0.422px"><span style="color:#fff">Space + click + drag</span> <span style="color:#444">Pan</span></div>
<div class="t" style="left:569.8px;top:543px;height:14px;line-height:14px;;letter-spacing:-0.088px"><span style="color:#fff">Alt + click + drag</span> <span style="color:#444">Move Pivot Point</span></div>
<div class="t" style="left:569.8px;top:557px;height:14px;line-height:14px;;letter-spacing:-0.298px"><span style="color:#fff">Shift</span> <span style="color:#444">Enable Snapping</span></div>
<div class="t" style="left:958px;top:576px;height:15px;line-height:15px;width:200px;text-align:center;color:#fff;letter-spacing:0.100px">Viewport Quality: High</div>
<div style="left:530px;top:598px;width:1057px;height:22px;background:#484848"></div>
<div style="left:540px;top:601px;width:73px;height:17px;background:#3a3a3a;border-radius:3px"></div>
<svg style="left:600px;top:606px" width="10" height="6.0" viewBox="0 0 10 6"><path d="M0.8 0.8L5 5l4.2-4.200" fill="none" stroke="#ddd" stroke-width="1.1"/></svg>
<div class="btn" style="left:866px;top:599px;width:100px;height:20px;"></div>
<svg style="left:866px;top:599px" width="20" height="20" viewBox="0 0 19 19"><path d="M5 4v11" stroke="#eee" stroke-width="1.800"/><path d="M15 4v11l-8-5.500z" fill="#eee"/></svg>
<svg style="left:886px;top:599px" width="20" height="20" viewBox="0 0 19 19"><path d="M11 4v11l-8-5.500z" fill="#eee"/><path d="M14 4v11" stroke="#eee" stroke-width="1.800"/></svg>
<div style="left:885.5px;top:600px;width:1px;height:18px;background:#3c3c3c"></div>
<svg style="left:906px;top:599px" width="20" height="20" viewBox="0 0 19 19"><path d="M4.500 3.500v12l9.500-6z" fill="#eee"/></svg>
<div style="left:905.5px;top:600px;width:1px;height:18px;background:#3c3c3c"></div>
<svg style="left:926px;top:599px" width="20" height="20" viewBox="0 0 19 19"><path d="M4.500 4v11" stroke="#eee" stroke-width="1.800"/><path d="M8 4v11l8-5.500z" fill="#eee"/></svg>
<div style="left:925.5px;top:600px;width:1px;height:18px;background:#3c3c3c"></div>
<svg style="left:946px;top:599px" width="20" height="20" viewBox="0 0 19 19"><path d="M4 4v11l8-5.500z" fill="#eee"/><path d="M14.500 4v11" stroke="#eee" stroke-width="1.800"/></svg>
<div style="left:945.5px;top:600px;width:1px;height:18px;background:#3c3c3c"></div>
<div class="btn" style="left:971px;top:599px;width:20px;height:20px;"></div>
<svg style="left:971px;top:599px" width="19" height="20" viewBox="0 0 19 20"><path d="M9 6.500H4.500v8h10v-8h-2" fill="none" stroke="#eee" stroke-width="1.300"/><path d="M9 3.500l3 3-3 3" fill="none" stroke="#eee" stroke-width="1.300"/></svg>
<div style="left:1232px;top:600px;width:37px;height:18px;background:#3a3a3a;border-radius:3px"></div>
<svg style="left:1234px;top:605.0px" width="14" height="8" viewBox="0 0 15 9"><path d="M4 0h11v9H4L0 4.500z" fill="#ddd"/><circle cx="4.800" cy="4.500" r="1.500" fill="#333"/></svg>
<div class="t" style="left:1257px;top:601px;height:18px;line-height:18px;color:#8a8a8a">0</div>
<div style="left:1272px;top:600px;width:31px;height:19px;background:#2b2b2b;border:1px solid #2c2c2c;border-radius:4px"></div><div style="left:1291px;top:601px;width:11px;height:17px;background:#333;border-left:1px solid #2c2c2c;border-radius:0 3px 3px 0"></div><svg style="left:1294px;top:605px" width="8" height="9" viewBox="0 0 8 9"><path d="M1 .8l5.500 3.700L1 8.200z" fill="none" stroke="#8a8a8a" stroke-width="1"/></svg><svg style="left:1272px;top:600px" width="20" height="19" viewBox="0 0 20 19"><path d="M3 7.500h3l4-3.500v11l-4-3.500H3z" fill="#2ecc71"/><path d="M12 6.500a4 4 0 0 1 0 6M14 4.500a7 7 0 0 1 0 10" fill="none" stroke="#2ecc71" stroke-width="1.300"/></svg>
<div style="left:1307px;top:600px;width:31px;height:19px;background:#454545;border:1px solid #2c2c2c;border-radius:4px"></div><div style="left:1326px;top:601px;width:11px;height:17px;background:#333;border-left:1px solid #2c2c2c;border-radius:0 3px 3px 0"></div><svg style="left:1329px;top:605px" width="8" height="9" viewBox="0 0 8 9"><path d="M1 .8l5.500 3.700L1 8.200z" fill="none" stroke="#8a8a8a" stroke-width="1"/></svg><svg style="left:1307px;top:600px" width="20" height="19" viewBox="0 0 20 19"><g transform="rotate(45 10 9.500)"><path d="M6.300 14V9a3.700 3.700 0 0 1 7.400 0V14" fill="none" stroke="#eee" stroke-width="2.300"/><path d="M6.300 14v-1.800M13.700 14v-1.800" stroke="#999" stroke-width="2.300"/></g></svg>
<div style="left:1342px;top:600px;width:31px;height:19px;background:#454545;border:1px solid #2c2c2c;border-radius:4px"></div><div style="left:1361px;top:601px;width:11px;height:17px;background:#333;border-left:1px solid #2c2c2c;border-radius:0 3px 3px 0"></div><svg style="left:1364px;top:605px" width="8" height="9" viewBox="0 0 8 9"><path d="M1 .8l5.500 3.700L1 8.200z" fill="none" stroke="#8a8a8a" stroke-width="1"/></svg><svg style="left:1342px;top:600px" width="20" height="19" viewBox="0 0 20 19"><path d="M7.500 3v13.500M12.500 3v13.500M3 7.500h14M3 12.500h14" stroke="#eee" stroke-width="1"/></svg>
<div style="left:1377px;top:600px;width:19px;height:19px;background:#262626;border:1px solid #222;border-radius:4px"></div>
<svg style="left:1377px;top:600px" width="19" height="19" viewBox="0 0 19 19"><rect x="3" y="4" width="4" height="4" fill="#2ecc71"/><rect x="8.700" y="4.700" width="7" height="4.200" fill="none" stroke="#2ecc71" stroke-width="1.400"/><rect x="8" y="11.300" width="8.500" height="3.700" fill="#2ecc71"/><rect x="3" y="9.500" width="4" height="5.500" fill="#2ecc71"/></svg>
<div style="left:1400px;top:600px;width:19px;height:19px;background:#454545;border:1px solid #2c2c2c;border-radius:4px"></div><svg style="left:1400px;top:600px" width="19" height="19" viewBox="0 0 19 19"><path d="M3.500 4.500l4.500 5-4.500 5z" fill="#ddd"/><path d="M8.500 5l4 4.500-4 4.500M12.500 5l4 4.500-4 4.500" fill="none" stroke="#ddd" stroke-width="1.500"/></svg>
<div style="left:1423px;top:600px;width:31px;height:19px;background:#454545;border:1px solid #2c2c2c;border-radius:4px"></div><div style="left:1442px;top:601px;width:11px;height:17px;background:#333;border-left:1px solid #2c2c2c;border-radius:0 3px 3px 0"></div><svg style="left:1445px;top:605px" width="8" height="9" viewBox="0 0 8 9"><path d="M1 .8l5.500 3.700L1 8.200z" fill="none" stroke="#8a8a8a" stroke-width="1"/></svg><svg style="left:1423px;top:600px" width="20" height="19" viewBox="0 0 20 19"><rect x="3.500" y="4" width="13" height="9" fill="none" stroke="#eee" stroke-width="1.200"/><rect x="3" y="13.500" width="14" height="2" fill="#eee"/></svg>
<div style="left:1458px;top:600px;width:31px;height:19px;background:#454545;border:1px solid #2c2c2c;border-radius:4px"></div><div style="left:1477px;top:601px;width:11px;height:17px;background:#333;border-left:1px solid #2c2c2c;border-radius:0 3px 3px 0"></div><svg style="left:1480px;top:605px" width="8" height="9" viewBox="0 0 8 9"><path d="M1 .8l5.500 3.700L1 8.200z" fill="none" stroke="#8a8a8a" stroke-width="1"/></svg><svg style="left:1458px;top:600px" width="20" height="19" viewBox="0 0 20 19"><rect x="3" y="3.500" width="9" height="6" fill="none" stroke="#ddd" stroke-width="1.100"/><path d="M14 6v5.500H6M16.500 8.500v5.500H9" fill="none" stroke="#aaa" stroke-width="1.100"/></svg>
<div style="left:1493px;top:600px;width:31px;height:19px;background:#454545;border:1px solid #2c2c2c;border-radius:4px"></div><div style="left:1512px;top:601px;width:11px;height:17px;background:#333;border-left:1px solid #2c2c2c;border-radius:0 3px 3px 0"></div><svg style="left:1515px;top:605px" width="8" height="9" viewBox="0 0 8 9"><path d="M1 .8l5.500 3.700L1 8.200z" fill="none" stroke="#8a8a8a" stroke-width="1"/></svg><svg style="left:1493px;top:600px" width="20" height="19" viewBox="0 0 20 19"><rect x="3" y="3" width="9" height="9" fill="#ddd"/><rect x="8" y="8" width="8.500" height="8.500" fill="#3a3a3a" stroke="#ddd" stroke-width="1.200"/></svg>
<div style="left:1528px;top:600px;width:31px;height:19px;background:#2b2b2b;border:1px solid #2c2c2c;border-radius:4px"></div><div style="left:1547px;top:601px;width:11px;height:17px;background:#333;border-left:1px solid #2c2c2c;border-radius:0 3px 3px 0"></div><svg style="left:1550px;top:605px" width="8" height="9" viewBox="0 0 8 9"><path d="M1 .8l5.500 3.700L1 8.200z" fill="none" stroke="#8a8a8a" stroke-width="1"/></svg><svg style="left:1528px;top:600px" width="20" height="19" viewBox="0 0 20 19"><rect x="3.5" y="3.5" width="2.800" height="2.800" fill="#2ecc71"/><rect x="3.5" y="9.5" width="2.800" height="2.800" fill="#2ecc71"/><rect x="6.5" y="6.5" width="2.800" height="2.800" fill="#2ecc71"/><rect x="6.5" y="12.5" width="2.800" height="2.800" fill="#2ecc71"/><rect x="9.5" y="3.5" width="2.800" height="2.800" fill="#2ecc71"/><rect x="9.5" y="9.5" width="2.800" height="2.800" fill="#2ecc71"/><rect x="12.5" y="6.5" width="2.800" height="2.800" fill="#2ecc71"/><rect x="12.5" y="12.5" width="2.800" height="2.800" fill="#2ecc71"/></svg>
<div style="left:1563px;top:600px;width:19px;height:19px;background:#2b2b2b;border:1px solid #2c2c2c;border-radius:4px"></div><svg style="left:1563px;top:600px" width="19" height="19" viewBox="0 0 19 19"><circle cx="9.500" cy="9.500" r="4" fill="none" stroke="#eee" stroke-width="2.600"/><g stroke="#eee" stroke-width="2.400"><path d="M9.500 2.500v3M9.500 13.500v3M2.500 9.500h3M13.500 9.500h3M4.600 4.600l2 2M12.400 12.400l2 2M14.400 4.600l-2 2M6.600 12.400l-2 2"/></g></svg>
<div style="left:1593px;top:85px;width:321px;height:22px;background:#1c1c1c"></div>
<div class="tab" style="left:1593px;top:85px;width:40px;height:22px;"></div>
<div class="t" style="left:1598px;top:86px;height:22px;line-height:22px;;letter-spacing:0.123px">Color</div>
<div class="tabi" style="left:1634px;top:85px;width:69px;height:22px;"></div>
<div class="t" style="left:1639px;top:86px;height:22px;line-height:22px;;letter-spacing:-0.290px">Add Layers</div>
<div style="left:1593px;top:107px;width:321px;height:417px;background:#464646"></div>
<div style="left:1901px;top:107px;width:12px;height:417px;background:#424242"></div>
<div style="left:1902px;top:108px;width:10px;height:368px;background:#555;border-radius:5px"></div>
<div style="left:1646px;top:120px;width:200px;height:200px;border-radius:50%;background:conic-gradient(from 90deg,#f00,#f0f,#00f,#0ff,#0f0,#ff0,#f00)"></div>
<div style="left:1672px;top:146px;width:148px;height:148px;border-radius:50%;background:#464646"></div>
<div style="left:1702px;top:176px;width:90px;height:90px;background:linear-gradient(to right,#000,rgba(0,0,0,0)),linear-gradient(to bottom,#fff,#f00)"></div>
<div style="left:1731px;top:170px;width:12px;height:12px;border:1px solid #ddd;border-radius:50%"></div>
<div style="left:1827px;top:214px;width:12px;height:12px;border:1px solid #fff;border-radius:50%"></div>
<div style="left:1600px;top:333px;width:22px;height:22px;background:#646464;border-radius:3px"></div>
<div class="t" style="left:1625px;top:334px;height:22px;line-height:22px;;letter-spacing:-0.184px">Dim Gray</div>
<div style="left:1871px;top:333px;width:22px;height:22px;background:#262626;border:1px solid #1e1e1e;border-radius:4px"></div>
<svg style="left:1875px;top:337px" width="14" height="14" viewBox="0 0 14 14"><path d="M1 13l.8-2.300 5.200-5.200 1.500 1.500-5.200 5.200z" fill="none" stroke="#ddd" stroke-width="1"/><path d="M6.200 4.200l3.600 3.600" stroke="#eee" stroke-width="1.800"/><path d="M8.700 5.300l2.600-2.600" stroke="#eee" stroke-width="3.200" stroke-linecap="round"/></svg>
<div style="left:1600px;top:361px;width:50px;height:17px;background:#4a4a4a;border:1px solid #333;border-radius:3px"></div>
<div class="t" style="left:1603px;top:362px;height:17px;line-height:17px;;letter-spacing:-0.181px">Hex</div>
<svg style="left:1635px;top:367px" width="10" height="6.0" viewBox="0 0 10 6"><path d="M0.8 0.8L5 5l4.2-4.200" fill="none" stroke="#bbb" stroke-width="1.1"/></svg>
<div class="fld" style="left:1653px;top:358px;width:240px;height:22px;"></div>
<div class="t" style="left:1658px;top:359px;height:22px;line-height:22px;color:#555">#</div>
<div class="t" style="left:1670px;top:359px;height:22px;line-height:22px;;letter-spacing:0.192px">646464</div>
<div style="left:1600px;top:390px;width:234px;height:4px;background:#e2e2e2;border-radius:2px"></div>
<div style="left:1828.5px;top:386.5px;width:11px;height:11px;background:#7fd4b6;border-radius:50%"></div>
<div style="left:1832px;top:390px;width:4px;height:4px;background:#5aa890;border-radius:50%"></div>
<div class="fld" style="left:1849px;top:384px;width:44px;height:16px;"></div>
<div class="t" style="left:1853px;top:385px;height:16px;line-height:16px;color:#555">A</div>
<div class="t" style="left:1866px;top:385px;height:16px;line-height:16px;;letter-spacing:-0.077px">255</div>
<div style="left:1597px;top:407px;width:299px;height:21px;background:#222"></div>
<div style="left:1599px;top:408px;width:148px;height:20px;background:#464646;border-radius:4px 4px 0 0"></div>
<div class="t" style="left:1599px;top:408px;height:20px;line-height:20px;width:148px;text-align:center;letter-spacing:-0.279px">Swatches</div>
<div class="t" style="left:1747px;top:408px;height:20px;line-height:20px;width:148px;text-align:center;color:#aaa;letter-spacing:0.008px">Generator</div>
<div style="left:1598px;top:431px;width:257px;height:18px;background:#585858;border-radius:4px"></div>
<div style="left:1599px;top:432px;width:62px;height:16px;background:#262626;border-radius:3px"></div>
<svg style="left:1603px;top:434px" width="12" height="12" viewBox="0 0 12 12"><path d="M1.500 1v10M4.500 1v10M7 1l3 10" stroke="#2ecc71" stroke-width="1.600"/></svg>
<div class="t" style="left:1620px;top:432px;height:18px;line-height:18px;;letter-spacing:0.030px">Library</div>
<svg style="left:1670px;top:434px" width="12" height="12" viewBox="0 0 12 12"><path d="M.6 2.500h10.800v8H.6z" fill="none" stroke="#ddd" stroke-width="1.100"/><path d="M.6 1h4v1.500" stroke="#ddd" fill="none"/><path d="M2.500 5.500h1.500M5 5.500h4.500M2.500 8h1.500M5 8h4.500" stroke="#ddd"/></svg>
<div class="t" style="left:1686px;top:432px;height:18px;line-height:18px;;letter-spacing:0.063px">Project</div>
<svg style="left:1737px;top:434px" width="10" height="12" viewBox="0 0 10 12"><path d="M1 .6h5l3 3v7.800H1z" fill="none" stroke="#ddd" stroke-width="1.100"/><path d="M6 .6v3h3" fill="none" stroke="#ddd"/></svg>
<div class="t" style="left:1751px;top:432px;height:18px;line-height:18px;;letter-spacing:-0.606px">Scene</div>
<svg style="left:1800px;top:434px" width="12" height="12" viewBox="0 0 12 12"><path d="M3.500 1h5a3 3 0 0 1 3 3v2.500l-4.500 4.500H3.500a3 3 0 0 1-3-3V4a3 3 0 0 1 3-3z" fill="none" stroke="#ddd" stroke-width="1.100"/><path d="M11 6.500H9a2 2 0 0 0-2 2v2.500" fill="none" stroke="#ddd"/></svg>
<div class="t" style="left:1816px;top:432px;height:18px;line-height:18px;;letter-spacing:-0.396px">Labels</div>
<div style="left:1858px;top:431px;width:38px;height:18px;background:#585858;border-radius:4px"></div>
<div style="left:1859px;top:432px;width:17px;height:16px;background:#262626;border-radius:3px"></div>
<svg style="left:1862px;top:434.500px" width="11" height="11" viewBox="0 0 11 11"><g fill="#2ecc71"><rect x="0" y="0" width="4.300" height="4.300" rx="1"/><rect x="6.500" y="0" width="4.300" height="4.300" rx="1"/><rect x="0" y="6.500" width="4.300" height="4.300" rx="1"/><rect x="6.500" y="6.500" width="4.300" height="4.300" rx="1"/></g></svg>
<svg style="left:1880px;top:435px" width="12" height="10" viewBox="0 0 12 10"><path d="M0 1h12M0 5h12M0 9h12" stroke="#ddd" stroke-width="1.100"/></svg>
<div style="left:1598px;top:452px;width:276px;height:17px;background:#555;border:1px solid #3c3c3c;border-radius:3px"></div>
<div class="t" style="left:1601px;top:454px;height:17px;line-height:17px;;letter-spacing:-0.331px">Simple</div>
<svg style="left:1860px;top:458px" width="10" height="6.0" viewBox="0 0 10 6"><path d="M0.8 0.8L5 5l4.2-4.200" fill="none" stroke="#ddd" stroke-width="1.1"/></svg>
<div style="left:1880px;top:460px;width:2px;height:2px;background:#ccc"></div>
<div style="left:1885px;top:460px;width:2px;height:2px;background:#ccc"></div>
<div style="left:1890px;top:460px;width:2px;height:2px;background:#ccc"></div>
<div style="left:1598px;top:470px;width:298px;height:54px;background:#262626"></div>
<div style="left:1600px;top:472px;width:18px;height:18px;background:#0b7bc6;border-radius:3px"></div>
<div style="left:1622px;top:472px;width:18px;height:18px;background:#10a0df;border-radius:3px"></div>
<div style="left:1644px;top:472px;width:18px;height:18px;background:#92c56d;border-radius:3px"></div>
<div style="left:1666px;top:472px;width:18px;height:18px;background:#f5e544;border-radius:3px"></div>
<div style="left:1688px;top:472px;width:18px;height:18px;background:#f5820b;border-radius:3px"></div>
<div style="left:1593px;top:530px;width:321px;height:22px;background:#1c1c1c"></div>
<div class="tab" style="left:1593px;top:530px;width:38px;height:22px;"></div>
<div class="t" style="left:1598px;top:531px;height:22px;line-height:22px;;letter-spacing:0.042px">Align</div>
<div style="left:1593px;top:552px;width:321px;height:68px;background:#464646"></div>
<div class="t" style="left:1601px;top:561px;height:22px;line-height:22px;;letter-spacing:0.047px">Alignment</div>
<div class="t" style="left:1601px;top:589px;height:22px;line-height:22px;;letter-spacing:0.297px">Distribution</div>
<div style="left:1790px;top:562px;width:54px;height:17.5px;background:#464646;border-radius:4px"></div><div style="left:1790px;top:562px;width:18px;height:17.5px;background:#2b2b2b;border-radius:4px 0 0 4px;box-shadow:inset 0 1px 0 #4a4a4a,inset 0 -1px 0 #222"></div><svg style="left:1790px;top:562px" width="18" height="17.500" viewBox="0 0 18 17.500"><g fill="#e6e6e6"><rect x="2.6" y="2.7" width="1" height="13.1"/><rect x="5.8" y="5.8" width="5.9" height="1.8"/><rect x="5.8" y="11" width="10" height="1.8"/></g></svg><div style="left:1808.5px;top:562px;width:17.5px;height:17.5px;background:#2b2b2b;border-radius:0;box-shadow:inset 0 1px 0 #4a4a4a,inset 0 -1px 0 #222"></div><svg style="left:1808px;top:562px" width="18" height="17.500" viewBox="0 0 18 17.500"><g fill="#e6e6e6"><rect x="8.8" y="2.7" width="1" height="13.1"/><rect x="5.8" y="5.8" width="7.2" height="1.8"/><rect x="3.8" y="11" width="11" height="1.8"/></g></svg><div style="left:1826.5px;top:562px;width:17.5px;height:17.5px;background:#2b2b2b;border-radius:0 4px 4px 0;box-shadow:inset 0 1px 0 #4a4a4a,inset 0 -1px 0 #222"></div><svg style="left:1826px;top:562px" width="18" height="17.500" viewBox="0 0 18 17.500"><g fill="#e6e6e6"><rect x="13.8" y="2.7" width="1" height="13.1"/><rect x="6" y="5.8" width="5.9" height="1.8"/><rect x="1.9" y="11" width="10" height="1.8"/></g></svg>
<div style="left:1852px;top:562px;width:54px;height:17.5px;background:#464646;border-radius:4px"></div><div style="left:1852px;top:562px;width:18px;height:17.5px;background:#2b2b2b;border-radius:4px 0 0 4px;box-shadow:inset 0 1px 0 #4a4a4a,inset 0 -1px 0 #222"></div><svg style="left:1852px;top:562px" width="18" height="17.500" viewBox="0 0 18 17.500"><g fill="#e6e6e6"><rect x="1.7" y="2.6" width="13.1" height="1"/><rect x="4.8" y="6.2" width="1.8" height="9.3"/><rect x="10" y="6.2" width="1.8" height="5.1"/></g></svg><div style="left:1870.5px;top:562px;width:17.5px;height:17.5px;background:#2b2b2b;border-radius:0;box-shadow:inset 0 1px 0 #4a4a4a,inset 0 -1px 0 #222"></div><svg style="left:1870px;top:562px" width="18" height="17.500" viewBox="0 0 18 17.500"><g fill="#e6e6e6"><rect x="1.7" y="8.8" width="12.7" height="1"/><rect x="4.8" y="4.1" width="1.8" height="10.7"/><rect x="9.6" y="6.2" width="1.8" height="6.5"/></g></svg><div style="left:1888.5px;top:562px;width:17.5px;height:17.5px;background:#2b2b2b;border-radius:0 4px 4px 0;box-shadow:inset 0 1px 0 #4a4a4a,inset 0 -1px 0 #222"></div><svg style="left:1888px;top:562px" width="18" height="17.500" viewBox="0 0 18 17.500"><g fill="#e6e6e6"><rect x="2.5" y="14.6" width="13.1" height="1"/><rect x="5.6" y="6.9" width="1.8" height="5.8"/><rect x="10.8" y="3.1" width="1.8" height="9.6"/></g></svg>
<div style="left:1790px;top:590.4px;width:54px;height:17.5px;background:#464646;border-radius:4px"></div><div style="left:1790px;top:590.4px;width:18px;height:17.5px;background:#2b2b2b;border-radius:4px 0 0 4px;box-shadow:inset 0 1px 0 #4a4a4a,inset 0 -1px 0 #222"></div><svg style="left:1790px;top:590.4px" width="18" height="17.500" viewBox="0 0 18 17.500"><g fill="#e6e6e6"><rect x="2.6" y="1.4" width="1" height="14.4"/><rect x="13.6" y="1.4" width="1" height="14.4"/><rect x="7.7" y="4.5" width="1.9" height="7.9"/></g></svg><div style="left:1808.5px;top:590.4px;width:17.5px;height:17.5px;background:#2b2b2b;border-radius:0;box-shadow:inset 0 1px 0 #4a4a4a,inset 0 -1px 0 #222"></div><svg style="left:1808px;top:590.4px" width="18" height="17.500" viewBox="0 0 18 17.500"><g fill="#e6e6e6"><rect x="2" y="2.2" width="13.8" height="1"/><rect x="2" y="13.5" width="13.8" height="1"/><rect x="4.8" y="7.6" width="8.2" height="2"/></g></svg><div style="left:1826.5px;top:590.4px;width:17.5px;height:17.5px;background:#2b2b2b;border-radius:0 4px 4px 0;box-shadow:inset 0 1px 0 #4a4a4a,inset 0 -1px 0 #222"></div><svg style="left:1826px;top:590.4px" width="18" height="17.500" viewBox="0 0 18 17.500"><g fill="#e6e6e6"><path d="M1.600 4V1.700H4M13.600 1.700H16V4M16 13.500v2.300h-2.400M4 15.800H1.600v-2.300" fill="none" stroke="#e6e6e6" stroke-width="1"/><rect x="3.6" y="8.9" width="2.1" height="3.5"/><rect x="7.8" y="6.9" width="2" height="3.4"/><rect x="11.9" y="4.8" width="2.1" height="3.4"/></g></svg>
<div style="left:494px;top:626px;width:1419px;height:22px;background:#1c1c1c"></div>
<div class="tab" style="left:494px;top:626px;width:89px;height:22px;"></div>
<div class="t" style="left:499px;top:627px;height:22px;line-height:22px;">Scene Window</div>
<div class="tabi" style="left:584px;top:626px;width:100px;height:22px;"></div>
<div class="t" style="left:589px;top:627px;height:22px;line-height:22px;;letter-spacing:-0.115px">JavaScript Editor</div>
<div class="tabi" style="left:685px;top:626px;width:112px;height:22px;"></div>
<div class="t" style="left:690px;top:627px;height:22px;line-height:22px;;letter-spacing:-0.192px">Dependency Graph</div>
<div style="left:494px;top:648px;width:1419px;height:22px;background:#262626"></div>
<div class="t" style="left:591px;top:649px;height:22px;line-height:22px;color:#a2a8ae;letter-spacing:-0.086px">Composition 1</div>
<svg style="left:763px;top:655px" width="9" height="9" viewBox="0 0 9 9"><path d="M.8 .8l7.400 7.400M8.200 .8L.8 8.200" stroke="#9a9a9a" stroke-width="1.100"/></svg>
<div style="left:781px;top:656px;width:1px;height:9px;background:#999"></div>
<div class="t" style="left:841px;top:649px;height:22px;line-height:22px;color:#a2a8ae;letter-spacing:-0.065px">background grid animation</div>
<svg style="left:1045px;top:655px" width="9" height="9" viewBox="0 0 9 9"><path d="M.8 .8l7.400 7.400M8.200 .8L.8 8.200" stroke="#9a9a9a" stroke-width="1.100"/></svg>
<div style="left:1063px;top:656px;width:1px;height:9px;background:#999"></div>
<div class="t" style="left:1118px;top:649px;height:22px;line-height:22px;color:#a2a8ae;letter-spacing:-0.183px">background grid animation 1</div>
<svg style="left:1327px;top:655px" width="9" height="9" viewBox="0 0 9 9"><path d="M.8 .8l7.400 7.400M8.200 .8L.8 8.200" stroke="#9a9a9a" stroke-width="1.100"/></svg>
<div style="left:1345px;top:656px;width:1px;height:9px;background:#999"></div>
<div class="t" style="left:1400px;top:649px;height:22px;line-height:22px;color:#a2a8ae;letter-spacing:-0.090px">background grid animation 2</div>
<svg style="left:1609px;top:655px" width="9" height="9" viewBox="0 0 9 9"><path d="M.8 .8l7.400 7.400M8.200 .8L.8 8.200" stroke="#9a9a9a" stroke-width="1.100"/></svg>
<div style="left:1627px;top:650px;width:282px;height:20px;background:#484848;border-radius:4px 4px 0 0"></div>
<div class="t" style="left:1627px;top:649px;height:22px;line-height:22px;width:260px;text-align:center;letter-spacing:0.042px">duplicator blend</div>
<svg style="left:1891px;top:655px" width="9" height="9" viewBox="0 0 9 9"><path d="M.8 .8l7.400 7.400M8.200 .8L.8 8.200" stroke="#bbb" stroke-width="1.100"/></svg>
<div style="left:494px;top:670px;width:525px;height:328px;background:#464646"></div>
<div style="left:497px;top:672px;width:313px;height:20px;background:#262626;border-radius:10px"></div>
<div class="t" style="left:510px;top:673px;height:20px;line-height:20px;color:#7d7d7d">Enter a Layer name</div>
<div class="btn" style="left:813px;top:672px;width:20px;height:20px;"></div>
<svg style="left:813px;top:672px" width="20" height="20" viewBox="0 0 20 20"><path d="M10 5v10M5 10h10" stroke="#eee" stroke-width="1.800"/><path d="M18 14.500v3.500h-3.500z" fill="#5fd3a0"/></svg>
<div style="left:857px;top:672px;width:20px;height:20px;background:#3a3a3a;border:1px solid #2c2c2c;border-radius:4px"></div>
<svg style="left:857px;top:672px" width="20" height="20" viewBox="0 0 20 20"><circle cx="8" cy="12.500" r="4" fill="#666"/><circle cx="10" cy="10.500" r="4" fill="#888"/><circle cx="12.500" cy="7.500" r="4" fill="#ddd"/></svg>
<div class="btn" style="left:879px;top:672px;width:20px;height:20px;"></div>
<svg style="left:879px;top:672px" width="20" height="20" viewBox="0 0 20 20"><g fill="#ddd"><circle cx="5" cy="5" r="1.100"/><circle cx="12" cy="5.500" r="1.100"/><circle cx="5" cy="12" r="1.100"/></g><path d="M11.500 8.500v6.500M8.300 11.700h6.500" stroke="#eee" stroke-width="1.600"/><path d="M18 14.500v3.500h-3.500z" fill="#5fd3a0"/></svg>
<div class="btn" style="left:901px;top:672px;width:20px;height:20px;"></div>
<svg style="left:901px;top:672px" width="20" height="20" viewBox="0 0 20 20"><g stroke="#ddd" stroke-width="1.100" fill="none"><path d="M3 5.500h4M10 5.500h7M3 10h7M13 10h4M3 14.500h3M9 14.500h5"/><circle cx="8.500" cy="5.500" r="1.500"/><circle cx="11.500" cy="10" r="1.500"/><circle cx="7.500" cy="14.500" r="1.500"/></g><path d="M18 14.500v3.500h-3.500z" fill="#5fd3a0"/></svg>
<div class="fld" style="left:923px;top:672px;width:94px;height:20px;"></div>
<div class="t" style="left:928px;top:673px;height:20px;line-height:20px;color:#4a4a4a">F</div>
<div class="t" style="left:940.5px;top:673px;height:20px;line-height:20px;">104</div>
<div style="left:494px;top:693px;width:525px;height:19px;background:#484848"></div>
<svg style="left:575px;top:696px" width="14" height="14" viewBox="0 0 14 14"><path d="M1 13l.8-2.300 5.200-5.200 1.500 1.500-5.200 5.200z" fill="none" stroke="#bbb" stroke-width="1"/><path d="M6.200 4.200l3.600 3.600" stroke="#eee" stroke-width="1.800"/><path d="M8.700 5.300l2.600-2.600" stroke="#eee" stroke-width="3.200" stroke-linecap="round"/></svg>
<svg style="left:593px;top:698.5px" width="14" height="8" viewBox="0 0 15 9"><path d="M4 0h11v9H4L0 4.500z" fill="#ddd"/><circle cx="4.800" cy="4.500" r="1.500" fill="#333"/></svg>
<div class="t" style="left:649px;top:693px;height:21px;line-height:21px;;letter-spacing:-0.304px">Name</div>
<div style="left:494px;top:712px;width:511px;height:250px;background:#3a3a3a;overflow:hidden"></div>
<div style="left:1005px;top:712px;width:14px;height:250px;background:#303030"></div>
<div style="left:1007px;top:713px;width:10px;height:219px;background:#505050;border-radius:5px"></div>
<div style="left:0;top:0;width:1019px;height:962px;overflow:hidden"><div style="left:573px;top:715px;width:16px;height:16px;background:#c8f07f;border-radius:3px"></div><svg style="left:593px;top:719.0px" width="14" height="8" viewBox="0 0 15 9"><path d="M4 0h11v9H4L0 4.500z" fill="#ddd"/><circle cx="4.800" cy="4.500" r="1.500" fill="#333"/></svg><svg style="left:648px;top:718px" width="15" height="11" viewBox="0 0 15 11"><rect x="0" y="0" width="8" height="2.600" fill="#8fdc8a"/><rect x="3.500" y="4" width="8" height="2.600" fill="#8fdc8a"/><rect x="7" y="8" width="8" height="2.600" fill="#c8f0b0"/></svg><div class="t" style="left:667px;top:713px;height:22px;line-height:22px;color:#e4e4e4;letter-spacing:0.091px">TransitionOffset</div><div style="left:965px;top:715px;width:21px;height:16px;background:#2b2b2b;border-radius:4px"></div><div style="left:975.5px;top:715px;width:1px;height:16px;background:#3a3a3a"></div><svg style="left:965px;top:715px" width="21" height="16" viewBox="0 0 21 16"><path d="M2.500 8l3-3h3v6h-3z" fill="#7a7a7a"/><path d="M18.500 8l-3-3h-3v6h3z" fill="#c455e8"/></svg><div style="left:991.5px;top:718.5px;width:9px;height:9px;border:1px solid #8a8a8a;border-radius:50%"></div><div style="left:573px;top:737px;width:16px;height:16px;background:#c4c4c4;border-radius:3px"></div><svg style="left:593px;top:741.0px" width="14" height="8" viewBox="0 0 15 9"><path d="M4 0h11v9H4L0 4.500z" fill="#ddd"/><circle cx="4.800" cy="4.500" r="1.500" fill="#333"/></svg><div style="left:611px;top:737px;width:31px;height:16px;background:#343434;border-radius:3px"></div><svg style="left:615px;top:743px" width="8" height="4.8" viewBox="0 0 10 6"><path d="M0.8 0.8L5 5l4.2-4.200" fill="none" stroke="#999" stroke-width="1.1"/></svg><svg style="left:648px;top:739px" width="14" height="12" viewBox="0 0 14 12"><path d="M0 1.500h5l1.200 1.500H14v9H0z" fill="#ccc"/><path d="M0 0h5l1.500 2H0z" fill="#ccc"/></svg><div class="t" style="left:667px;top:735px;height:22px;line-height:22px;color:#d0d0d0">4</div><div style="left:991.5px;top:740.5px;width:9px;height:9px;border:1px solid #8a8a8a;border-radius:50%"></div><div style="left:569px;top:757px;width:434px;height:20px;background:#52563f;border-radius:0 4px 4px 0"></div><div style="left:573px;top:759px;width:16px;height:16px;background:#c8f07f;border-radius:3px"></div><svg style="left:593px;top:763.0px" width="14" height="8" viewBox="0 0 15 9"><path d="M4 0h11v9H4L0 4.500z" fill="#ddd"/><circle cx="4.800" cy="4.500" r="1.500" fill="#333"/></svg><svg style="left:667px;top:762px" width="15" height="11" viewBox="0 0 15 11"><rect x="0" y="0" width="8" height="2.600" fill="#8fdc8a"/><rect x="3.500" y="4" width="8" height="2.600" fill="#8fdc8a"/><rect x="7" y="8" width="8" height="2.600" fill="#c8f0b0"/></svg><div class="t" style="left:686px;top:757px;height:22px;line-height:22px;color:#e4e4e4;letter-spacing:-0.341px">Stagger [Noise Scale]</div><div style="left:965px;top:759px;width:21px;height:16px;background:#2b2b2b;border-radius:4px"></div><div style="left:975.5px;top:759px;width:1px;height:16px;background:#3a3a3a"></div><svg style="left:965px;top:759px" width="21" height="16" viewBox="0 0 21 16"><path d="M2.500 8l3-3h3v6h-3z" fill="#7a7a7a"/><path d="M18.500 8l-3-3h-3v6h3z" fill="#c455e8"/></svg><div style="left:991.5px;top:762.5px;width:9px;height:9px;border:1px solid #8a8a8a;border-radius:50%"></div><div style="left:573px;top:781px;width:16px;height:16px;background:#c8f07f;border-radius:3px"></div><svg style="left:593px;top:785.0px" width="14" height="8" viewBox="0 0 15 9"><path d="M4 0h11v9H4L0 4.500z" fill="#ddd"/><circle cx="4.800" cy="4.500" r="1.500" fill="#333"/></svg><div style="left:630px;top:781px;width:31px;height:16px;background:#343434;border-radius:3px"></div><svg style="left:634px;top:787px" width="8" height="4.8" viewBox="0 0 10 6"><path d="M0.8 0.8L5 5l4.2-4.200" fill="none" stroke="#999" stroke-width="1.1"/></svg><div style="left:649.5px;top:786px;width:6px;height:6px;background:#e4e4e4;border-radius:50%"></div><svg style="left:667px;top:782.0px" width="14" height="14" viewBox="0 0 14 14"><defs><clipPath id="nc"><rect x="0" y="0" width="14" height="14" rx="2.500"/></clipPath></defs><g clip-path="url(#nc)"><rect x="0.00" y="0.00" width="2.400" height="2.400" fill="#9be096"/><rect x="2.33" y="0.00" width="2.400" height="2.400" fill="#2f6a38"/><rect x="4.67" y="0.00" width="2.400" height="2.400" fill="#9be096"/><rect x="7.00" y="0.00" width="2.400" height="2.400" fill="#9be096"/><rect x="9.33" y="0.00" width="2.400" height="2.400" fill="#2f6a38"/><rect x="11.67" y="0.00" width="2.400" height="2.400" fill="#9be096"/><rect x="0.00" y="2.33" width="2.400" height="2.400" fill="#2f6a38"/><rect x="2.33" y="2.33" width="2.400" height="2.400" fill="#9be096"/><rect x="4.67" y="2.33" width="2.400" height="2.400" fill="#2f6a38"/><rect x="7.00" y="2.33" width="2.400" height="2.400" fill="#9be096"/><rect x="9.33" y="2.33" width="2.400" height="2.400" fill="#9be096"/><rect x="11.67" y="2.33" width="2.400" height="2.400" fill="#2f6a38"/><rect x="0.00" y="4.67" width="2.400" height="2.400" fill="#9be096"/><rect x="2.33" y="4.67" width="2.400" height="2.400" fill="#9be096"/><rect x="4.67" y="4.67" width="2.400" height="2.400" fill="#2f6a38"/><rect x="7.00" y="4.67" width="2.400" height="2.400" fill="#2f6a38"/><rect x="9.33" y="4.67" width="2.400" height="2.400" fill="#9be096"/><rect x="11.67" y="4.67" width="2.400" height="2.400" fill="#9be096"/><rect x="0.00" y="7.00" width="2.400" height="2.400" fill="#2f6a38"/><rect x="2.33" y="7.00" width="2.400" height="2.400" fill="#9be096"/><rect x="4.67" y="7.00" width="2.400" height="2.400" fill="#9be096"/><rect x="7.00" y="7.00" width="2.400" height="2.400" fill="#2f6a38"/><rect x="9.33" y="7.00" width="2.400" height="2.400" fill="#9be096"/><rect x="11.67" y="7.00" width="2.400" height="2.400" fill="#2f6a38"/><rect x="0.00" y="9.33" width="2.400" height="2.400" fill="#9be096"/><rect x="2.33" y="9.33" width="2.400" height="2.400" fill="#2f6a38"/><rect x="4.67" y="9.33" width="2.400" height="2.400" fill="#9be096"/><rect x="7.00" y="9.33" width="2.400" height="2.400" fill="#9be096"/><rect x="9.33" y="9.33" width="2.400" height="2.400" fill="#2f6a38"/><rect x="11.67" y="9.33" width="2.400" height="2.400" fill="#9be096"/><rect x="0.00" y="11.67" width="2.400" height="2.400" fill="#2f6a38"/><rect x="2.33" y="11.67" width="2.400" height="2.400" fill="#9be096"/><rect x="4.67" y="11.67" width="2.400" height="2.400" fill="#2f6a38"/><rect x="7.00" y="11.67" width="2.400" height="2.400" fill="#2f6a38"/><rect x="9.33" y="11.67" width="2.400" height="2.400" fill="#9be096"/><rect x="11.67" y="11.67" width="2.400" height="2.400" fill="#9be096"/></g></svg><div class="t" style="left:686px;top:779px;height:22px;line-height:22px;color:#e4e4e4;letter-spacing:-0.048px">TransitionNoise</div><div style="left:965px;top:781px;width:21px;height:16px;background:#2b2b2b;border-radius:4px"></div><div style="left:975.5px;top:781px;width:1px;height:16px;background:#3a3a3a"></div><div style="left:965px;top:781px;width:10.5px;height:16px;border:1px solid #a8935a;border-radius:2px"></div><svg style="left:965px;top:781px" width="21" height="16" viewBox="0 0 21 16"><path d="M2.500 8l3-3h3v6h-3z" fill="#d6bb6a"/><path d="M18.500 8l-3-3h-3v6h3z" fill="#c455e8"/></svg><div style="left:991.5px;top:784.5px;width:9px;height:9px;border:1px solid #8a8a8a;border-radius:50%"></div><svg style="left:652px;top:800px" width="12" height="12" viewBox="0 0 12 12"><path d="M1.500 0v10.500H11" fill="none" stroke="#aaa" stroke-width="1" stroke-dasharray="1 1"/></svg><div class="t" style="left:666px;top:801px;height:22px;line-height:22px;;letter-spacing:-0.034px">Strength</div><div style="left:907px;top:803px;width:84px;height:16px;background:#2b2b2b;border-radius:3px 0 0 3px"></div><div style="left:991px;top:803px;width:10px;height:16px;background:#333;border-radius:0 3px 3px 0"></div><div class="t" style="left:911px;top:804px;height:16px;line-height:16px;color:#777">%</div><div class="t" style="left:924px;top:804px;height:16px;line-height:16px;">0.0</div><svg style="left:978px;top:806px" width="10" height="10" viewBox="0 0 10 10"><path d="M5 .5L9.500 5 5 9.500.5 5z" fill="#2ecc71"/></svg><svg style="left:993px;top:807px" width="7" height="8" viewBox="0 0 7 8"><path d="M0 1h3.500l3 3-3 3H0z" fill="#8a8a8a"/></svg><div style="left:496px;top:824px;width:18px;height:18px;background:#2b2b2b;border-radius:3px"></div><div style="left:515px;top:824px;width:18px;height:18px;background:#2b2b2b;border-radius:3px"></div><div style="left:534px;top:824px;width:18px;height:18px;background:#2b2b2b;border-radius:3px"></div><svg style="left:517px;top:828px" width="14" height="10" viewBox="0 0 14 10"><path d="M.7 5C2.500 2 4.500 1 7 1s4.500 1 6.300 4C11.500 8 9.500 9 7 9S2.500 8 .7 5z" fill="none" stroke="#ccc" stroke-width="1"/><circle cx="7" cy="5" r="2" fill="#ccc"/></svg><div style="left:573px;top:825px;width:16px;height:16px;background:#ffe47a;border-radius:3px"></div><svg style="left:593px;top:829.0px" width="14" height="8" viewBox="0 0 15 9"><path d="M4 0h11v9H4L0 4.500z" fill="#ddd"/><circle cx="4.800" cy="4.500" r="1.500" fill="#333"/></svg><svg style="left:667px;top:826px" width="14" height="14" viewBox="0 0 14 14"><rect x="1.0" y="1.0" width="2" height="2" fill="#e6d86a"/><rect x="1.0" y="6.5" width="2" height="2" fill="#e6d86a"/><rect x="1.0" y="12.0" width="2" height="2" fill="#e6d86a"/><rect x="6.5" y="1.0" width="2" height="2" fill="#e6d86a"/><rect x="6.5" y="6.5" width="2" height="2" fill="#e6d86a"/><rect x="6.5" y="12.0" width="2" height="2" fill="#e6d86a"/><rect x="12.0" y="1.0" width="2" height="2" fill="#e6d86a"/><rect x="12.0" y="6.5" width="2" height="2" fill="#e6d86a"/><rect x="12.0" y="12.0" width="2" height="2" fill="#e6d86a"/></svg><div class="t" style="left:686px;top:823px;height:22px;line-height:22px;color:#e4e4e4;letter-spacing:0.038px">WaveDuplicator</div><div style="left:965px;top:825px;width:21px;height:16px;background:#2b2b2b;border-radius:4px"></div><div style="left:975.5px;top:825px;width:1px;height:16px;background:#3a3a3a"></div><svg style="left:965px;top:825px" width="21" height="16" viewBox="0 0 21 16"><path d="M2.500 8l3-3h3v6h-3z" fill="#d6bb6a"/><path d="M18.500 8l-3-3h-3v6h3z" fill="#7a7a7a"/></svg><div style="left:991.5px;top:828.5px;width:9px;height:9px;border:1px solid #8a8a8a;border-radius:50%"></div><div style="left:496px;top:846px;width:18px;height:18px;background:#2b2b2b;border-radius:3px"></div><div style="left:515px;top:846px;width:18px;height:18px;background:#2b2b2b;border-radius:3px"></div><div style="left:534px;top:846px;width:18px;height:18px;background:#2b2b2b;border-radius:3px"></div><div style="left:573px;top:847px;width:16px;height:16px;background:#ffe47a;border-radius:3px"></div><svg style="left:593px;top:851.0px" width="14" height="8" viewBox="0 0 15 9"><path d="M4 0h11v9H4L0 4.500z" fill="#ddd"/><circle cx="4.800" cy="4.500" r="1.500" fill="#333"/></svg><svg style="left:667px;top:848px" width="14" height="14" viewBox="0 0 14 14"><rect x="1" y="1" width="12" height="12" fill="none" stroke="#e6d86a" stroke-width="1.200" stroke-dasharray="5 2.500" stroke-dashoffset="2.500"/></svg><div class="t" style="left:686px;top:845px;height:22px;line-height:22px;color:#9a9a9a;letter-spacing:-0.209px">InputShape</div><div style="left:965px;top:847px;width:21px;height:16px;background:#2b2b2b;border-radius:4px"></div><div style="left:975.5px;top:847px;width:1px;height:16px;background:#3a3a3a"></div><svg style="left:965px;top:847px" width="21" height="16" viewBox="0 0 21 16"><path d="M2.500 8l3-3h3v6h-3z" fill="#7a7a7a"/><path d="M18.500 8l-3-3h-3v6h3z" fill="#c455e8"/></svg><div style="left:991.5px;top:850.5px;width:9px;height:9px;border:1px solid #8a8a8a;border-radius:50%"></div><div style="left:496px;top:868px;width:18px;height:18px;background:#2b2b2b;border-radius:3px"></div><div style="left:515px;top:868px;width:18px;height:18px;background:#2b2b2b;border-radius:3px"></div><div style="left:534px;top:868px;width:18px;height:18px;background:#2b2b2b;border-radius:3px"></div><div style="left:573px;top:869px;width:16px;height:16px;background:#c4c4c4;border-radius:3px"></div><svg style="left:593px;top:873.0px" width="14" height="8" viewBox="0 0 15 9"><path d="M4 0h11v9H4L0 4.500z" fill="#ddd"/><circle cx="4.800" cy="4.500" r="1.500" fill="#333"/></svg><div style="left:611px;top:869px;width:31px;height:16px;background:#343434;border-radius:3px"></div><svg style="left:617px;top:873px" width="5" height="8" viewBox="0 0 5 8"><path d="M0.6 0.6L4.200 4 .6 7.400" fill="none" stroke="#999" stroke-width="1"/></svg><svg style="left:648px;top:871px" width="14" height="12" viewBox="0 0 14 12"><path d="M0 1.500h5l1.200 1.500H14v9H0z" fill="#ccc"/><path d="M0 0h5l1.500 2H0z" fill="#ccc"/></svg><div class="t" style="left:667px;top:867px;height:22px;line-height:22px;color:#a8a8a8">3</div><div style="left:991.5px;top:872.5px;width:9px;height:9px;border:1px solid #8a8a8a;border-radius:50%"></div><div style="left:496px;top:890px;width:18px;height:18px;background:#2b2b2b;border-radius:3px"></div><div style="left:515px;top:890px;width:18px;height:18px;background:#2b2b2b;border-radius:3px"></div><svg style="left:518px;top:893px" width="12" height="12" viewBox="0 0 14 14"><path d="M12.500 6.500A5.700 5.700 0 1 1 9.500 2" fill="none" stroke="#ddd" stroke-width="1.200"/><path d="M4 6.500l2.500 2.500 6-7" fill="none" stroke="#ddd" stroke-width="1.400"/></svg><div style="left:573px;top:891px;width:16px;height:16px;background:#c8f07f;border-radius:3px"></div><svg style="left:593px;top:895.0px" width="14" height="8" viewBox="0 0 15 9"><path d="M4 0h11v9H4L0 4.500z" fill="#ddd"/><circle cx="4.800" cy="4.500" r="1.500" fill="#333"/></svg><div style="left:611px;top:891px;width:31px;height:16px;background:#343434;border-radius:3px"></div><svg style="left:617px;top:895px" width="5" height="8" viewBox="0 0 5 8"><path d="M0.6 0.6L4.200 4 .6 7.400" fill="none" stroke="#999" stroke-width="1"/></svg><div style="left:630.5px;top:896px;width:6px;height:6px;background:#e4e4e4;border-radius:50%"></div><svg style="left:648px;top:892px" width="15" height="14" viewBox="0 0 15 14"><g fill="#8fdc8a"><rect x="0" y="1" width="2" height="2"/><rect x="0" y="6" width="2" height="2"/><rect x="0" y="11" width="2" height="2"/></g><g fill="#ddd"><rect x="12.500" y="1" width="2" height="2"/><rect x="12.500" y="6" width="2" height="2"/><rect x="12.500" y="11" width="2" height="2"/></g><path d="M5 1.500l5 5M10 1.500l-5 5" stroke="#ddd" stroke-width="1"/><path d="M4.500 11.500h6" stroke="#aaa" stroke-width="1.600"/></svg><div class="t" style="left:667px;top:889px;height:22px;line-height:22px;color:#e4e4e4;letter-spacing:0.260px">2to3</div><div style="left:965px;top:891px;width:21px;height:16px;background:#2b2b2b;border-radius:4px"></div><div style="left:975.5px;top:891px;width:1px;height:16px;background:#3a3a3a"></div><svg style="left:965px;top:891px" width="21" height="16" viewBox="0 0 21 16"><path d="M2.500 8l3-3h3v6h-3z" fill="#d6bb6a"/><path d="M18.500 8l-3-3h-3v6h3z" fill="#c455e8"/></svg><div style="left:991.5px;top:894.5px;width:9px;height:9px;border:1px solid #8a8a8a;border-radius:50%"></div><div style="left:496px;top:912px;width:18px;height:18px;background:#2b2b2b;border-radius:3px"></div><div style="left:515px;top:912px;width:18px;height:18px;background:#2b2b2b;border-radius:3px"></div><div style="left:534px;top:912px;width:18px;height:18px;background:#2b2b2b;border-radius:3px"></div><div style="left:573px;top:913px;width:16px;height:16px;background:#c4c4c4;border-radius:3px"></div><svg style="left:593px;top:917.0px" width="14" height="8" viewBox="0 0 15 9"><path d="M4 0h11v9H4L0 4.500z" fill="#ddd"/><circle cx="4.800" cy="4.500" r="1.500" fill="#333"/></svg><div style="left:611px;top:913px;width:31px;height:16px;background:#343434;border-radius:3px"></div><svg style="left:617px;top:917px" width="5" height="8" viewBox="0 0 5 8"><path d="M0.6 0.6L4.200 4 .6 7.400" fill="none" stroke="#999" stroke-width="1"/></svg><svg style="left:648px;top:915px" width="14" height="12" viewBox="0 0 14 12"><path d="M0 1.500h5l1.200 1.500H14v9H0z" fill="#ccc"/><path d="M0 0h5l1.500 2H0z" fill="#ccc"/></svg><div class="t" style="left:667px;top:911px;height:22px;line-height:22px;color:#a8a8a8">2</div><div style="left:991.5px;top:916.5px;width:9px;height:9px;border:1px solid #8a8a8a;border-radius:50%"></div><div style="left:496px;top:934px;width:18px;height:18px;background:#2b2b2b;border-radius:3px"></div><div style="left:515px;top:934px;width:18px;height:18px;background:#2b2b2b;border-radius:3px"></div><svg style="left:518px;top:937px" width="12" height="12" viewBox="0 0 14 14"><path d="M12.500 6.500A5.700 5.700 0 1 1 9.500 2" fill="none" stroke="#ddd" stroke-width="1.200"/><path d="M4 6.500l2.500 2.500 6-7" fill="none" stroke="#ddd" stroke-width="1.400"/></svg><div style="left:573px;top:935px;width:16px;height:16px;background:#c8f07f;border-radius:3px"></div><svg style="left:593px;top:939.0px" width="14" height="8" viewBox="0 0 15 9"><path d="M4 0h11v9H4L0 4.500z" fill="#ddd"/><circle cx="4.800" cy="4.500" r="1.500" fill="#333"/></svg><div style="left:611px;top:935px;width:31px;height:16px;background:#343434;border-radius:3px"></div><svg style="left:617px;top:939px" width="5" height="8" viewBox="0 0 5 8"><path d="M0.6 0.6L4.200 4 .6 7.400" fill="none" stroke="#999" stroke-width="1"/></svg><div style="left:630.5px;top:940px;width:6px;height:6px;background:#e4e4e4;border-radius:50%"></div><svg style="left:648px;top:936px" width="15" height="14" viewBox="0 0 15 14"><g fill="#8fdc8a"><rect x="0" y="1" width="2" height="2"/><rect x="0" y="6" width="2" height="2"/><rect x="0" y="11" width="2" height="2"/></g><g fill="#ddd"><rect x="12.500" y="1" width="2" height="2"/><rect x="12.500" y="6" width="2" height="2"/><rect x="12.500" y="11" width="2" height="2"/></g><path d="M5 1.500l5 5M10 1.500l-5 5" stroke="#ddd" stroke-width="1"/><path d="M4.500 11.500h6" stroke="#aaa" stroke-width="1.600"/></svg><div class="t" style="left:667px;top:933px;height:22px;line-height:22px;color:#e4e4e4;letter-spacing:0.074px">1to2 &amp; 4to1</div><div style="left:965px;top:935px;width:21px;height:16px;background:#2b2b2b;border-radius:4px"></div><div style="left:975.5px;top:935px;width:1px;height:16px;background:#3a3a3a"></div><svg style="left:965px;top:935px" width="21" height="16" viewBox="0 0 21 16"><path d="M2.500 8l3-3h3v6h-3z" fill="#d6bb6a"/><path d="M18.500 8l-3-3h-3v6h3z" fill="#c455e8"/></svg><div style="left:991.5px;top:938.5px;width:9px;height:9px;border:1px solid #8a8a8a;border-radius:50%"></div><div style="left:496px;top:956px;width:18px;height:18px;background:#2b2b2b;border-radius:3px"></div><div style="left:515px;top:956px;width:18px;height:18px;background:#2b2b2b;border-radius:3px"></div><div style="left:534px;top:956px;width:18px;height:18px;background:#2b2b2b;border-radius:3px"></div><div style="left:573px;top:957px;width:16px;height:16px;background:#c4c4c4;border-radius:3px"></div><svg style="left:593px;top:961.0px" width="14" height="8" viewBox="0 0 15 9"><path d="M4 0h11v9H4L0 4.500z" fill="#ddd"/><circle cx="4.800" cy="4.500" r="1.500" fill="#333"/></svg><div style="left:611px;top:957px;width:31px;height:16px;background:#343434;border-radius:3px"></div><svg style="left:617px;top:961px" width="5" height="8" viewBox="0 0 5 8"><path d="M0.6 0.6L4.200 4 .6 7.400" fill="none" stroke="#999" stroke-width="1"/></svg><svg style="left:648px;top:959px" width="14" height="12" viewBox="0 0 14 12"><path d="M0 1.500h5l1.200 1.500H14v9H0z" fill="#ccc"/><path d="M0 0h5l1.500 2H0z" fill="#ccc"/></svg><div class="t" style="left:667px;top:955px;height:22px;line-height:22px;color:#a8a8a8">1</div><div style="left:991.5px;top:960.5px;width:9px;height:9px;border:1px solid #8a8a8a;border-radius:50%"></div></div>
<div style="left:494px;top:962px;width:525px;height:14px;background:#303030"></div>
<div style="left:495px;top:964.5px;width:508px;height:9px;background:#505050;border-radius:4.500px"></div>
<div style="left:494px;top:976px;width:525px;height:22px;background:#484848"></div>
<div class="btn" style="left:497px;top:977px;width:20px;height:19px;"></div>
<svg style="left:500px;top:982.5px" width="14" height="8" viewBox="0 0 15 9"><path d="M4 0h11v9H4L0 4.500z" fill="#ddd"/><circle cx="4.800" cy="4.500" r="1.500" fill="#333"/></svg>
<div class="t" style="left:520px;top:977px;height:22px;line-height:22px;;letter-spacing:-0.280px">1 selected</div>
<div class="btn" style="left:810px;top:977px;width:20px;height:19px;"></div>
<svg style="left:810px;top:977px" width="20" height="19" viewBox="0 0 20 19"><rect x="4.500" y="4" width="11" height="11" fill="none" stroke="#ddd" stroke-width="1.100"/><rect x="8.500" y="8" width="3" height="3" fill="#ddd"/></svg>
<div style="left:833px;top:978px;width:183px;height:18px;background:#5a5a5a;border-radius:4px"></div>
<div style="left:834px;top:979px;width:86px;height:16px;background:#2b2b2b;border-radius:3px"></div>
<svg style="left:838px;top:981px" width="13" height="12" viewBox="0 0 13 12"><path d="M1 1.500h11M3.500 6h8M1 10.500h11" stroke="#2ecc71" stroke-width="1.700"/></svg>
<div class="t" style="left:856px;top:977px;height:22px;line-height:22px;;letter-spacing:-0.055px">Time Editor</div>
<svg style="left:926px;top:981px" width="13" height="12" viewBox="0 0 13 12"><path d="M2.500 .5v11M.5 9.500h12" stroke="#ccc" stroke-width="1" fill="none"/><path d="M3.500 8.500l7-5" stroke="#ccc" stroke-width="1.100"/></svg>
<div class="t" style="left:945px;top:977px;height:22px;line-height:22px;;letter-spacing:-0.087px">Graph Editor</div>
<div style="left:1019px;top:670px;width:7px;height:328px;background:#222"></div>
<div style="left:1021px;top:827px;width:2px;height:1.5px;background:#777"></div>
<div style="left:1021px;top:830px;width:2px;height:1.5px;background:#777"></div>
<div style="left:1021px;top:833px;width:2px;height:1.5px;background:#777"></div>
<div style="left:1021px;top:836px;width:2px;height:1.5px;background:#777"></div>
<div style="left:1021px;top:839px;width:2px;height:1.5px;background:#777"></div>
<div style="left:1021px;top:842px;width:2px;height:1.5px;background:#777"></div>
<div style="left:1026px;top:670px;width:887px;height:328px;background:#262626"></div>
<svg style="left:1026px;top:670px" width="887" height="24" viewBox="0 0 887 24"><rect x="7.8" y="16" width="1" height="8" fill="#aaa"/><rect x="18.2" y="20" width="1" height="4" fill="#aaa"/><rect x="28.7" y="20" width="1" height="4" fill="#aaa"/><rect x="39.1" y="20" width="1" height="4" fill="#aaa"/><rect x="49.6" y="20" width="1" height="4" fill="#aaa"/><rect x="60.0" y="16" width="1" height="8" fill="#aaa"/><rect x="70.4" y="20" width="1" height="4" fill="#aaa"/><rect x="80.9" y="20" width="1" height="4" fill="#aaa"/><rect x="91.3" y="20" width="1" height="4" fill="#aaa"/><rect x="101.8" y="20" width="1" height="4" fill="#aaa"/><rect x="112.2" y="16" width="1" height="8" fill="#aaa"/><rect x="122.6" y="20" width="1" height="4" fill="#aaa"/><rect x="133.1" y="20" width="1" height="4" fill="#aaa"/><rect x="143.5" y="20" width="1" height="4" fill="#aaa"/><rect x="154.0" y="20" width="1" height="4" fill="#aaa"/><rect x="164.4" y="16" width="1" height="8" fill="#aaa"/><rect x="174.8" y="20" width="1" height="4" fill="#aaa"/><rect x="185.3" y="20" width="1" height="4" fill="#aaa"/><rect x="195.7" y="20" width="1" height="4" fill="#aaa"/><rect x="206.2" y="20" width="1" height="4" fill="#aaa"/><rect x="216.6" y="16" width="1" height="8" fill="#aaa"/><rect x="227.0" y="20" width="1" height="4" fill="#aaa"/><rect x="237.5" y="20" width="1" height="4" fill="#aaa"/><rect x="247.9" y="20" width="1" height="4" fill="#aaa"/><rect x="258.4" y="20" width="1" height="4" fill="#aaa"/><rect x="268.8" y="16" width="1" height="8" fill="#aaa"/><rect x="279.2" y="20" width="1" height="4" fill="#aaa"/><rect x="289.7" y="20" width="1" height="4" fill="#aaa"/><rect x="300.1" y="20" width="1" height="4" fill="#aaa"/><rect x="310.6" y="20" width="1" height="4" fill="#aaa"/><rect x="321.0" y="16" width="1" height="8" fill="#aaa"/><rect x="331.4" y="20" width="1" height="4" fill="#aaa"/><rect x="341.9" y="20" width="1" height="4" fill="#aaa"/><rect x="352.3" y="20" width="1" height="4" fill="#aaa"/><rect x="362.8" y="20" width="1" height="4" fill="#aaa"/><rect x="373.2" y="16" width="1" height="8" fill="#aaa"/><rect x="383.6" y="20" width="1" height="4" fill="#aaa"/><rect x="394.1" y="20" width="1" height="4" fill="#aaa"/><rect x="404.5" y="20" width="1" height="4" fill="#aaa"/><rect x="415.0" y="20" width="1" height="4" fill="#aaa"/><rect x="425.4" y="16" width="1" height="8" fill="#aaa"/><rect x="435.8" y="20" width="1" height="4" fill="#aaa"/><rect x="446.3" y="20" width="1" height="4" fill="#aaa"/><rect x="456.7" y="20" width="1" height="4" fill="#aaa"/><rect x="467.2" y="20" width="1" height="4" fill="#aaa"/><rect x="477.6" y="16" width="1" height="8" fill="#aaa"/><rect x="488.0" y="20" width="1" height="4" fill="#aaa"/><rect x="498.5" y="20" width="1" height="4" fill="#aaa"/><rect x="508.9" y="20" width="1" height="4" fill="#aaa"/><rect x="519.4" y="20" width="1" height="4" fill="#aaa"/><rect x="529.8" y="16" width="1" height="8" fill="#aaa"/><rect x="540.2" y="20" width="1" height="4" fill="#aaa"/><rect x="550.7" y="20" width="1" height="4" fill="#aaa"/><rect x="561.1" y="20" width="1" height="4" fill="#aaa"/><rect x="571.6" y="20" width="1" height="4" fill="#aaa"/><rect x="582.0" y="16" width="1" height="8" fill="#aaa"/><rect x="592.4" y="20" width="1" height="4" fill="#aaa"/><rect x="602.9" y="20" width="1" height="4" fill="#aaa"/><rect x="613.3" y="20" width="1" height="4" fill="#aaa"/><rect x="623.8" y="20" width="1" height="4" fill="#aaa"/><rect x="634.2" y="16" width="1" height="8" fill="#aaa"/><rect x="644.6" y="20" width="1" height="4" fill="#aaa"/><rect x="655.1" y="20" width="1" height="4" fill="#aaa"/><rect x="665.5" y="20" width="1" height="4" fill="#aaa"/><rect x="676.0" y="20" width="1" height="4" fill="#aaa"/><rect x="686.4" y="16" width="1" height="8" fill="#aaa"/><rect x="696.8" y="20" width="1" height="4" fill="#aaa"/><rect x="707.3" y="20" width="1" height="4" fill="#aaa"/><rect x="717.7" y="20" width="1" height="4" fill="#aaa"/><rect x="728.2" y="20" width="1" height="4" fill="#aaa"/><rect x="738.6" y="16" width="1" height="8" fill="#aaa"/><rect x="749.0" y="20" width="1" height="4" fill="#aaa"/><rect x="759.5" y="20" width="1" height="4" fill="#aaa"/><rect x="769.9" y="20" width="1" height="4" fill="#aaa"/><rect x="780.4" y="20" width="1" height="4" fill="#aaa"/><rect x="790.8" y="16" width="1" height="8" fill="#aaa"/><rect x="801.2" y="20" width="1" height="4" fill="#aaa"/><rect x="811.7" y="20" width="1" height="4" fill="#aaa"/><rect x="822.1" y="20" width="1" height="4" fill="#aaa"/><rect x="832.6" y="20" width="1" height="4" fill="#aaa"/><rect x="843.0" y="16" width="1" height="8" fill="#aaa"/><rect x="853.4" y="20" width="1" height="4" fill="#aaa"/><rect x="863.9" y="20" width="1" height="4" fill="#aaa"/><rect x="874.3" y="20" width="1" height="4" fill="#aaa"/></svg>
<div class="t" style="left:1029px;top:672px;height:15px;line-height:15px;">0</div>
<div class="t" style="left:1065.5px;top:672px;height:15px;line-height:15px;width:40px;text-align:center">15</div>
<div class="t" style="left:1117.7px;top:672px;height:15px;line-height:15px;width:40px;text-align:center">30</div>
<div class="t" style="left:1169.9px;top:672px;height:15px;line-height:15px;width:40px;text-align:center">45</div>
<div class="t" style="left:1222.1px;top:672px;height:15px;line-height:15px;width:40px;text-align:center">60</div>
<div class="t" style="left:1274.3px;top:672px;height:15px;line-height:15px;width:40px;text-align:center">75</div>
<div class="t" style="left:1326.5px;top:672px;height:15px;line-height:15px;width:40px;text-align:center">90</div>
<div class="t" style="left:1379.7px;top:672px;height:15px;line-height:15px;width:40px;text-align:center">105</div>
<div class="t" style="left:1431.9px;top:672px;height:15px;line-height:15px;width:40px;text-align:center">120</div>
<div class="t" style="left:1484.1px;top:672px;height:15px;line-height:15px;width:40px;text-align:center">135</div>
<div class="t" style="left:1536.3px;top:672px;height:15px;line-height:15px;width:40px;text-align:center">150</div>
<div class="t" style="left:1588.5px;top:672px;height:15px;line-height:15px;width:40px;text-align:center">165</div>
<div class="t" style="left:1640.7px;top:672px;height:15px;line-height:15px;width:40px;text-align:center">180</div>
<div class="t" style="left:1692.9px;top:672px;height:15px;line-height:15px;width:40px;text-align:center">195</div>
<div class="t" style="left:1745.1px;top:672px;height:15px;line-height:15px;width:40px;text-align:center">210</div>
<div class="t" style="left:1797.3px;top:672px;height:15px;line-height:15px;width:40px;text-align:center">225</div>
<div class="t" style="left:1849.5px;top:672px;height:15px;line-height:15px;width:40px;text-align:center">240</div>
<div style="left:1026px;top:694px;width:887px;height:16px;background:#464646"></div>
<div style="left:1029px;top:693px;width:5px;height:18px;background:#6fcfb0;border-radius:1px"></div>
<div style="left:1906px;top:693px;width:5px;height:18px;background:#6fcfb0;border-radius:1px"></div>
<div style="left:0;top:0;width:1913px;height:962px;overflow:hidden"><div style="left:1034px;top:714px;width:870px;height:18px;background:repeating-linear-gradient(135deg,#cef381 0,#cef381 11.300px,#efff94 11.700px,#efff94 12.500px,#b6dc70 13px,#b6dc70 23.900px,#efff94 24.300px,#efff94 25px,#cef381 25.170px)"></div><div class="t" style="left:1042px;top:714px;height:18px;line-height:18px;color:#2a2a2a;letter-spacing:0.091px">TransitionOffset</div><div style="left:1034px;top:736px;width:870px;height:18px;background:#c2c2c2;border-radius:3px"></div><div class="t" style="left:1042px;top:736px;height:18px;line-height:18px;color:#2a2a2a">4</div><div style="left:1034px;top:758px;width:870px;height:18px;background-color:#dcf3a4;background-image:radial-gradient(#aed066 0.750px,transparent 1.050px);background-size:2.670px 2.670px;border:1px solid #fbfff0"></div><div class="t" style="left:1042px;top:758px;height:18px;line-height:18px;color:#2a2a2a;letter-spacing:-0.341px">Stagger [Noise Scale]</div><div style="left:1034px;top:780px;width:870px;height:18px;background:repeating-linear-gradient(135deg,#cef381 0,#cef381 11.300px,#efff94 11.700px,#efff94 12.500px,#b6dc70 13px,#b6dc70 23.900px,#efff94 24.300px,#efff94 25px,#cef381 25.170px)"></div><div class="t" style="left:1042px;top:780px;height:18px;line-height:18px;color:#2a2a2a;letter-spacing:-0.048px">TransitionNoise</div><div style="left:1034px;top:824px;width:870px;height:18px;background:#ffe876;border-radius:3px"></div><div class="t" style="left:1042px;top:824px;height:18px;line-height:18px;color:#2a2a2a;letter-spacing:0.038px">WaveDuplicator</div><div style="left:1034px;top:846px;width:870px;height:18px;background:#ffe876;border-radius:3px"></div><div class="t" style="left:1042px;top:846px;height:18px;line-height:18px;color:#2a2a2a;letter-spacing:-0.209px">InputShape</div><div style="left:1034px;top:868px;width:870px;height:18px;background:#c2c2c2;border-radius:3px"></div><div class="t" style="left:1042px;top:868px;height:18px;line-height:18px;color:#2a2a2a">3</div><div style="left:1034px;top:890px;width:870px;height:18px;background:repeating-linear-gradient(135deg,#cef381 0,#cef381 11.300px,#efff94 11.700px,#efff94 12.500px,#b6dc70 13px,#b6dc70 23.900px,#efff94 24.300px,#efff94 25px,#cef381 25.170px)"></div><div class="t" style="left:1042px;top:890px;height:18px;line-height:18px;color:#2a2a2a;letter-spacing:0.260px">2to3</div><div style="left:1034px;top:912px;width:870px;height:18px;background:#c2c2c2;border-radius:3px"></div><div class="t" style="left:1042px;top:912px;height:18px;line-height:18px;color:#2a2a2a">2</div><div style="left:1034px;top:934px;width:870px;height:18px;background:repeating-linear-gradient(135deg,#cef381 0,#cef381 11.300px,#efff94 11.700px,#efff94 12.500px,#b6dc70 13px,#b6dc70 23.900px,#efff94 24.300px,#efff94 25px,#cef381 25.170px)"></div><div class="t" style="left:1042px;top:934px;height:18px;line-height:18px;color:#2a2a2a;letter-spacing:0.074px">1to2 &amp; 4to1</div><div style="left:1034px;top:956px;width:870px;height:18px;background:#c2c2c2;border-radius:3px"></div><div class="t" style="left:1042px;top:956px;height:18px;line-height:18px;color:#2a2a2a">1</div><div style="left:1164.8px;top:897.5px;width:3px;height:3px;background:#7d9d4e;border-radius:50%"></div><div style="left:1255.8px;top:897.5px;width:3px;height:3px;background:#7d9d4e;border-radius:50%"></div><div style="left:1112.5px;top:941.5px;width:3px;height:3px;background:#7d9d4e;border-radius:50%"></div><div style="left:1402.5px;top:941.5px;width:3px;height:3px;background:#7d9d4e;border-radius:50%"></div><div style="left:1475.3px;top:941.5px;width:3px;height:3px;background:#7d9d4e;border-radius:50%"></div></div>
<svg style="left:1392px;top:805px" width="9" height="9" viewBox="0 0 9 9"><path d="M4.500 0L9 4.500 4.500 9 0 4.500z" fill="#ccc"/></svg>
<div style="left:1396px;top:686px;width:1px;height:276px;background:#6fcfb0"></div>
<svg style="left:1389px;top:683px" width="15" height="11" viewBox="0 0 15 11"><path d="M0 0h15l-1 2.500-5.500 8h-2l-5.500-8z" fill="#6fcfb0"/></svg>
<div style="left:1026px;top:962px;width:887px;height:14px;background:#303030"></div>
<div style="left:1028px;top:964.5px;width:884px;height:9px;background:#505050;border-radius:4.500px"></div>
<div style="left:1026px;top:976px;width:887px;height:22px;background:#484848"></div>
<div class="btn" style="left:1029px;top:977px;width:19px;height:19px;"></div>
<svg style="left:1029px;top:977px" width="19" height="19" viewBox="0 0 19 19"><path d="M3 4.500h13M3 9h13" stroke="#eee" stroke-width="1.400"/><path d="M3 13.500h3M8 13.500h3M12.500 13.500h1.500" stroke="#eee" stroke-width="1.400"/><path d="M17.500 14v3.500H14z" fill="#5fd3a0"/></svg>
<div class="fld" style="left:1050px;top:978px;width:150px;height:17px;"></div>
<div class="t" style="left:1053px;top:979px;height:18px;line-height:18px;;letter-spacing:-0.094px">Default Keyframe Layer</div>
<div class="fld" style="left:1206px;top:978px;width:70px;height:17px;"></div>
<div class="t" style="left:1211px;top:978px;height:18px;line-height:18px;color:#4a4a4a">F</div>
<div class="t" style="left:1222px;top:978px;height:18px;line-height:18px;color:#aaa">-</div>
<div class="t" style="left:1282px;top:977px;height:22px;line-height:22px;;letter-spacing:-0.139px">Align:</div>
<div style="left:1319px;top:978px;width:51px;height:17px;background:#242424;border-radius:4px"></div>
<svg style="left:1319px;top:978px" width="17" height="17" viewBox="0 0 17 17"><g stroke="#eee" stroke-width="1.200" fill="none"><path d="M3.500 3v11M6 6h2M10 6h4M6 11.500h8"/></g></svg>
<div style="left:1335.5px;top:978px;width:1px;height:17px;background:#464646"></div>
<svg style="left:1336px;top:978px" width="17" height="17" viewBox="0 0 17 17"><g stroke="#eee" stroke-width="1.200" fill="none"><path d="M8.500 2v13M3 6h2M12 6h2M3 11.500h11"/><circle cx="8.500" cy="8.500" r="1" fill="#5fd3a0" stroke="none"/></g></svg>
<div style="left:1352.5px;top:978px;width:1px;height:17px;background:#464646"></div>
<svg style="left:1353px;top:978px" width="17" height="17" viewBox="0 0 17 17"><g stroke="#eee" stroke-width="1.200" fill="none"><path d="M13.500 3v11M3 6h4M9 6h2M3 11.500h8"/></g></svg>
<div style="left:1376px;top:978px;width:17px;height:17px;background:#2b2b2b;border:1px solid #222;border-radius:4px"></div>
<svg style="left:1376px;top:978px" width="17" height="17" viewBox="0 0 17 17"><rect x="3.500" y="3.500" width="10" height="10" fill="none" stroke="#ddd" stroke-width="1.100" stroke-dasharray="6 2 2 0"/><g fill="#ddd"><rect x="2.500" y="2.500" width="2.500" height="2.500"/><rect x="12" y="2.500" width="2.500" height="2.500"/><rect x="2.500" y="12" width="2.500" height="2.500"/><rect x="12" y="12" width="2.500" height="2.500"/><rect x="7.500" y="7.500" width="2" height="2"/></g></svg>
<div style="left:1397px;top:978px;width:30px;height:17px;background:#3a3a3a;border:1px solid #2c2c2c;border-radius:4px"></div>
<div style="left:1397px;top:978px;width:18px;height:17px;background:#2b2b2b;border:1px solid #222;border-radius:4px 0 0 4px"></div>
<svg style="left:1397px;top:978px" width="18" height="17" viewBox="0 0 18 17"><g transform="rotate(45 9 8.500)"><path d="M5.800 12.500V8a3.200 3.200 0 0 1 6.400 0V12.500" fill="none" stroke="#eee" stroke-width="2.100"/><path d="M5.800 12.500v-1.600M12.200 12.500v-1.600" stroke="#999" stroke-width="2.100"/></g></svg>
<svg style="left:1417px;top:982.500px" width="8" height="9" viewBox="0 0 8 9"><path d="M1 .8l5.500 3.700L1 8.200z" fill="none" stroke="#999" stroke-width="1"/></svg>
<div style="left:1432px;top:978px;width:30px;height:17px;background:#3a3a3a;border:1px solid #2c2c2c;border-radius:4px"></div>
<div style="left:1432px;top:978px;width:18px;height:17px;background:#2b2b2b;border:1px solid #222;border-radius:4px 0 0 4px"></div>
<svg style="left:1432px;top:978px" width="18" height="17" viewBox="0 0 18 17"><path d="M2.500 8.500h2M6 6v5M9 3v11M12 6v5M13.500 8.500h2" stroke="#ddd" stroke-width="1.100" fill="none"/></svg>
<svg style="left:1452px;top:982.500px" width="8" height="9" viewBox="0 0 8 9"><path d="M1 .8l5.500 3.700L1 8.200z" fill="none" stroke="#999" stroke-width="1"/></svg>
<svg style="left:1744px;top:980px" width="15" height="15" viewBox="0 0 15 15"><circle cx="6" cy="6" r="4.800" fill="none" stroke="#ddd" stroke-width="1"/><path d="M3.500 6h5" stroke="#ddd"/><path d="M9.500 9.500l3.500 3.500" stroke="#ddd" stroke-width="1.500"/></svg>
<div style="left:1767px;top:986px;width:115px;height:2px;background:#3a3a3a;border-radius:1px"></div>
<div style="left:1762px;top:982px;width:10px;height:10px;background:#7fd4b6;border-radius:50%"></div>
<div style="left:1765px;top:985px;width:4px;height:4px;background:#4a9a80;border-radius:50%"></div>
<svg style="left:1887px;top:980px" width="15" height="15" viewBox="0 0 15 15"><circle cx="6" cy="6" r="4.800" fill="none" stroke="#ddd" stroke-width="1"/><path d="M3.500 6h5M6 3.500v5" stroke="#ddd"/><path d="M9.500 9.500l3.500 3.500" stroke="#ddd" stroke-width="1.500"/></svg>
<div style="left:494px;top:1004px;width:1419px;height:22px;background:#333"></div>
<svg style="left:498px;top:1009px" width="3" height="12" viewBox="0 0 3 12"><circle cx="1.5" cy="1.5" r="1" fill="#888"/><circle cx="1.5" cy="6" r="1" fill="#888"/><circle cx="1.5" cy="10.5" r="1" fill="#888"/></svg>
<div class="btn" style="left:507px;top:1005px;width:18px;height:19px;"></div>
<svg style="left:507px;top:1005px" width="18" height="19" viewBox="0 0 18 19"><path d="M3 3.500h11.500v8.500H12v2.500L9 12H3z" fill="#eee"/><path d="M4.500 6h8.500M4.500 8h8.500M4.500 10h6" stroke="#333" stroke-width=".9"/><path d="M17 14.500V18h-3.500z" fill="#5fd3a0"/></svg>
<div style="left:528px;top:1007px;width:18px;height:15px;background:#2ecc71;border-radius:2px"></div>
<div class="t" style="left:528px;top:1007px;height:15px;line-height:15px;width:18px;text-align:center;color:#0a2a14;font-size:11px">9+</div>
<div style="left:554px;top:1011.5px;width:6px;height:6px;background:#2ecc71;border-radius:50%"></div>
<div class="t" style="left:565px;top:1005px;height:22px;line-height:22px;;letter-spacing:-0.244px">Save reminder: 10 minutes since your last save.</div>
<div class="t" style="left:1349px;top:1004px;height:22px;line-height:22px;font-style:italic;letter-spacing:-0.734px">Click to see next message</div>
<div style="left:1477px;top:1006px;width:80px;height:18px;background:#d6bd66;border-radius:2px"></div>
<div class="t" style="left:1482px;top:1007px;height:18px;line-height:18px;color:#1a1a1a;letter-spacing:-0.338px">Feedback</div>
<svg style="left:1540px;top:1008px" width="14" height="14" viewBox="0 0 14 14"><path d="M2 1h7l3 3v9H2z" fill="#f2f2f2"/><path d="M4 5h5M4 7.500h4" stroke="#aaa" stroke-width=".8"/><path d="M6 10.500l5.500-5 1.500 1.500-5.500 5-2 .5z" fill="#f29a3a"/></svg>
<div style="left:1560px;top:1006px;width:109px;height:18px;background:#2ecc71;border-radius:2px"></div>
<div class="t" style="left:1565px;top:1007px;height:18px;line-height:18px;color:#1a1a1a;letter-spacing:-0.192px">Upgrade to Pro</div>
<svg style="left:1650px;top:1008px" width="16" height="14" viewBox="0 0 16 14"><path d="M1.500 6c0-2 1-3.500 2-3.500s1 1 1.500 1 .800-1.500 1.500-1.500 1 2 1 4-1 5.500-3 5.500-3-3.500-3-5.500z" fill="#f5c542"/><path d="M8.500 6c0-2 .5-4 1.200-4s1 1.500 1.500 1.500.800-1 1.500-1 2 1.500 2 3.500-1 5.500-3 5.500-3.200-3.500-3.200-5.500z" fill="#f5c542"/></svg>
<div style="left:1672px;top:1006px;width:130px;height:18px;background:#c08df2;border-radius:2px"></div>
<div class="t" style="left:1677px;top:1007px;height:18px;line-height:18px;color:#1a1a1a;letter-spacing:-0.122px">New Beta Available</div>
<svg style="left:1785px;top:1008px" width="14" height="14" viewBox="0 0 14 14"><circle cx="7" cy="7.500" r="5.500" fill="#f7c744"/><path d="M3 4l3.500-3.500L9 5z" fill="#e8568a"/><circle cx="5" cy="7" r=".8" fill="#553"/><circle cx="9" cy="7" r=".8" fill="#553"/><path d="M4.500 9.500q2.500 2 5 0" stroke="#a33" fill="none"/><circle cx="11.500" cy="3" r="1" fill="#4ac"/><circle cx="12.500" cy="10" r="1" fill="#e55"/></svg>
<div style="left:1805px;top:1006px;width:106px;height:18px;background:#36a9f4;border-radius:2px"></div>
<div class="t" style="left:1810px;top:1007px;height:18px;line-height:18px;color:#1a1a1a;letter-spacing:-0.283px">Tips and Tricks</div>
<svg style="left:1894px;top:1008px" width="14" height="14" viewBox="0 0 14 14"><path d="M12.500 1.500c-4 0-7 3-8.500 7l2 2c4-1.500 6.500-4.500 6.500-9z" fill="#e8e8f2"/><circle cx="9" cy="5" r="1.300" fill="#5a9ae0"/><path d="M4 8.500l-2.500.5 2-3zM6 10.500l-.5 2.500 3-2z" fill="#e0443a"/><path d="M3 11l-2 2 .5-2.500z" fill="#f5a030"/></svg>
<div style="left:169px;top:43px;width:224px;height:286px;background:#272727;box-shadow:0 3px 6px rgba(0,0,0,.55)"></div>
<div style="left:399px;top:164px;width:170px;height:644px;background:#272727;box-shadow:0 3px 6px rgba(0,0,0,.55)"></div>
<div style="left:169px;top:67px;width:223px;height:1px;background:#4a4a4a"></div>
<div style="left:169px;top:92px;width:223px;height:1px;background:#4a4a4a"></div>
<div style="left:169px;top:257px;width:223px;height:1px;background:#4a4a4a"></div>
<div style="left:169px;top:282px;width:223px;height:1px;background:#4a4a4a"></div>
<div style="left:169px;top:162px;width:401px;height:26px;background:#6e6e6e;border:3px solid #b4e61e"></div>
<div class="t" style="left:191px;top:44px;height:23px;line-height:23px;color:#ececec;letter-spacing:-0.337px">Add Layers Popover...</div>
<div class="t" style="left:340px;top:44px;height:23px;line-height:23px;color:#ececec;letter-spacing:0.131px">Ctrl+.</div>
<div class="t" style="left:191px;top:69px;height:23px;line-height:23px;color:#ececec;letter-spacing:0.068px">Primitives</div>
<svg style="left:383px;top:76px" width="5" height="8" viewBox="0 0 5 8"><path d="M.3 .3L4.600 4 .3 7.700z" fill="#b0b0b0"/></svg>
<div class="t" style="left:191px;top:94px;height:23px;line-height:23px;color:#ececec;letter-spacing:-0.029px">Text</div>
<div class="t" style="left:191px;top:117px;height:23px;line-height:23px;color:#ececec;letter-spacing:-0.095px">Background</div>
<div class="t" style="left:340px;top:117px;height:23px;line-height:23px;color:#ececec;letter-spacing:0.152px">Ctrl+Y</div>
<div class="t" style="left:191px;top:140px;height:23px;line-height:23px;color:#ececec;letter-spacing:-0.315px">Camera</div>
<div class="t" style="left:340px;top:140px;height:23px;line-height:23px;color:#ececec;letter-spacing:0.471px">Ctrl+M</div>
<div class="t" style="left:191px;top:165px;height:23px;line-height:23px;color:#ececec;letter-spacing:-0.601px">Shapes</div>
<svg style="left:383px;top:172px" width="5" height="8" viewBox="0 0 5 8"><path d="M.3 .3L4.600 4 .3 7.700z" fill="#b0b0b0"/></svg>
<div class="t" style="left:191px;top:188px;height:23px;line-height:23px;color:#ececec;letter-spacing:-0.105px">Behaviours</div>
<svg style="left:383px;top:195px" width="5" height="8" viewBox="0 0 5 8"><path d="M.3 .3L4.600 4 .3 7.700z" fill="#b0b0b0"/></svg>
<div class="t" style="left:191px;top:211px;height:23px;line-height:23px;color:#ececec;letter-spacing:0.004px">Effects</div>
<svg style="left:383px;top:218px" width="5" height="8" viewBox="0 0 5 8"><path d="M.3 .3L4.600 4 .3 7.700z" fill="#b0b0b0"/></svg>
<div class="t" style="left:191px;top:234px;height:23px;line-height:23px;color:#ececec;letter-spacing:0.292px">Utilities</div>
<svg style="left:383px;top:241px" width="5" height="8" viewBox="0 0 5 8"><path d="M.3 .3L4.600 4 .3 7.700z" fill="#b0b0b0"/></svg>
<div class="t" style="left:191px;top:259px;height:23px;line-height:23px;color:#ececec;letter-spacing:-0.072px">Layout</div>
<svg style="left:383px;top:266px" width="5" height="8" viewBox="0 0 5 8"><path d="M.3 .3L4.600 4 .3 7.700z" fill="#b0b0b0"/></svg>
<div class="t" style="left:191px;top:284px;height:23px;line-height:23px;color:#ececec;letter-spacing:-0.057px">Text Animation Presets</div>
<svg style="left:383px;top:291px" width="5" height="8" viewBox="0 0 5 8"><path d="M.3 .3L4.600 4 .3 7.700z" fill="#b0b0b0"/></svg>
<div class="t" style="left:191px;top:307px;height:23px;line-height:23px;color:#ececec;letter-spacing:-0.489px">Demo Scenes</div>
<svg style="left:383px;top:314px" width="5" height="8" viewBox="0 0 5 8"><path d="M.3 .3L4.600 4 .3 7.700z" fill="#b0b0b0"/></svg>
<div class="t" style="left:414px;top:165px;height:23px;line-height:23px;color:#ececec;letter-spacing:-0.338px">Basic Line</div>
<div class="t" style="left:414px;top:188px;height:23px;line-height:23px;color:#ececec;letter-spacing:-0.545px">Basic Shape</div>
<div class="t" style="left:414px;top:211px;height:23px;line-height:23px;color:#ececec;letter-spacing:-0.143px">Component (Pro)</div>
<div class="t" style="left:414px;top:234px;height:23px;line-height:23px;color:#ececec;letter-spacing:-0.333px">Connect Shape</div>
<div class="t" style="left:414px;top:257px;height:23px;line-height:23px;color:#ececec;letter-spacing:-0.146px">Convex Hull</div>
<div class="t" style="left:414px;top:280px;height:23px;line-height:23px;color:#ececec;letter-spacing:-0.056px">Corner Pin</div>
<div class="t" style="left:414px;top:303px;height:23px;line-height:23px;color:#ececec;letter-spacing:-0.366px">Custom Shape</div>
<div class="t" style="left:414px;top:326px;height:23px;line-height:23px;color:#ececec;letter-spacing:0.137px">Duplicator</div>
<div class="t" style="left:414px;top:349px;height:23px;line-height:23px;color:#ececec;letter-spacing:-0.175px">Extract Sub-Meshes</div>
<div class="t" style="left:414px;top:372px;height:23px;line-height:23px;color:#ececec;letter-spacing:-0.120px">Extrude (Pro)</div>
<div class="t" style="left:414px;top:395px;height:23px;line-height:23px;color:#ececec;letter-spacing:-0.414px">Footage Shape</div>
<div class="t" style="left:414px;top:418px;height:23px;line-height:23px;color:#ececec;letter-spacing:-0.278px">Forge Dynamics (Pro)</div>
<div class="t" style="left:414px;top:441px;height:23px;line-height:23px;color:#ececec;letter-spacing:-0.153px">Grid Layout Group (Pro)</div>
<div class="t" style="left:414px;top:464px;height:23px;line-height:23px;color:#ececec;letter-spacing:-0.189px">Grid Layout Row (Pro)</div>
<div class="t" style="left:414px;top:487px;height:23px;line-height:23px;color:#ececec;letter-spacing:-0.473px">Image To Shapes</div>
<div class="t" style="left:414px;top:510px;height:23px;line-height:23px;color:#ececec;letter-spacing:-0.213px">Isolines (Pro)</div>
<div class="t" style="left:414px;top:533px;height:23px;line-height:23px;color:#ececec;letter-spacing:-0.348px">JavaScript Shape (Pro)</div>
<div class="t" style="left:414px;top:556px;height:23px;line-height:23px;color:#ececec;letter-spacing:-0.190px">Layout Group (Pro)</div>
<div class="t" style="left:414px;top:579px;height:23px;line-height:23px;color:#ececec;letter-spacing:0.017px">Merge</div>
<div class="t" style="left:414px;top:602px;height:23px;line-height:23px;color:#ececec;letter-spacing:-0.387px">Mesh Shape (Pro)</div>
<div class="t" style="left:414px;top:625px;height:23px;line-height:23px;color:#ececec;letter-spacing:0.196px">Outline</div>
<div class="t" style="left:414px;top:648px;height:23px;line-height:23px;color:#ececec;letter-spacing:-0.137px">Points to Path</div>
<div class="t" style="left:414px;top:671px;height:23px;line-height:23px;color:#ececec;letter-spacing:-0.098px">Pre-Comp</div>
<div class="t" style="left:414px;top:694px;height:23px;line-height:23px;color:#ececec;letter-spacing:-0.402px">Quad Tree Shape</div>
<div class="t" style="left:414px;top:717px;height:23px;line-height:23px;color:#ececec;letter-spacing:-0.648px">Ray</div>
<div class="t" style="left:414px;top:740px;height:23px;line-height:23px;color:#ececec;letter-spacing:-0.326px">Segment Path (Pro)</div>
<div class="t" style="left:414px;top:763px;height:23px;line-height:23px;color:#ececec;letter-spacing:-0.190px">Shortest Path (Pro)</div>
<div class="t" style="left:414px;top:786px;height:23px;line-height:23px;color:#ececec;letter-spacing:-0.386px">Spacer (Pro)</div>
</body></html>
